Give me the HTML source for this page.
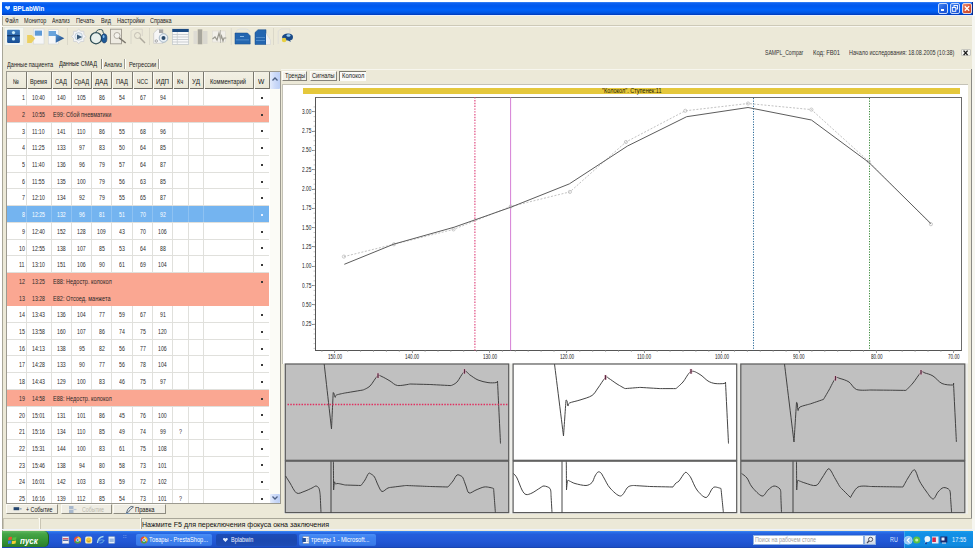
<!DOCTYPE html><html><head><meta charset="utf-8"><style>
*{margin:0;padding:0;box-sizing:border-box}
html,body{width:975px;height:550px;overflow:hidden;background:#fff;font-family:"Liberation Sans",sans-serif;color:#000}
.ab{position:absolute}
.t{position:absolute;white-space:nowrap;line-height:1}

</style></head><body>
<div class="ab" style="left:2px;top:2px;width:971px;height:529px;background:#ECE9D8"></div>
<div class="ab" style="left:2px;top:2px;width:971px;height:13px;background:linear-gradient(#3d85f5 0%,#0a5ff0 12%,#0058ee 30%,#0062fa 60%,#0054e0 85%,#0038b8 100%)"></div>
<svg class="ab" style="left:4.6px;top:5.8px" width="5.6" height="4.3" viewBox="0 0 7 6" preserveAspectRatio="none"><path d="M3.5 6 L0.3 2.6 C-0.5 1.4 0.5 0 1.8 0 C2.6 0 3.2 0.6 3.5 1.1 C3.8 0.6 4.4 0 5.2 0 C6.5 0 7.5 1.4 6.7 2.6 Z" fill="#cfe6ff"/></svg>
<div class="t" style="left:12.80px;top:5.22px;font-size:7.8px;font-weight:bold;font-style:normal;color:#fff;transform:scaleX(0.802);transform-origin:0 0;">BPLabWin</div>
<div class="ab" style="left:938.1px;top:2.7px;width:10px;height:11px;border-radius:2px;border:0.8px solid #c8d8f8;background:linear-gradient(135deg,#4a88f0,#2462e0 50%,#1c52d0)"></div>
<div class="ab" style="left:940.6px;top:9.2px;width:3.5px;height:1.6px;background:#fff"></div>
<div class="ab" style="left:950.1px;top:2.7px;width:10px;height:11px;border-radius:2px;border:0.8px solid #c8d8f8;background:linear-gradient(135deg,#4a88f0,#2462e0 50%,#1c52d0)"></div>
<svg class="ab" style="left:950.1px;top:2.7px" width="10" height="11"><rect x="4" y="2.5" width="3.5" height="3.5" fill="none" stroke="#fff" stroke-width="0.9"/><rect x="2.3" y="4.5" width="3.5" height="3.8" fill="#2462e0" stroke="#fff" stroke-width="0.9"/></svg>
<div class="ab" style="left:962.1px;top:2.7px;width:10px;height:11px;border-radius:2px;border:0.8px solid #e8d8d8;background:linear-gradient(135deg,#e8907a,#d8583a 50%,#c84424)"></div>
<svg class="ab" style="left:962.1px;top:2.7px" width="10" height="11"><path d="M2.8 3.2 L7.2 7.8 M7.2 3.2 L2.8 7.8" stroke="#fff" stroke-width="1.3"/></svg>
<div class="ab" style="left:972px;top:2px;width:1px;height:13px;background:#0a2a8a"></div>
<div class="ab" style="left:2px;top:14.8px;width:971px;height:1.6px;background:#eaf0fc"></div>
<div class="ab" style="left:2.2px;top:16px;width:1.1px;height:515px;background:#a8a698"></div>
<div class="t" style="left:4.50px;top:17.26px;font-size:7px;font-weight:normal;font-style:normal;color:#222;transform:scaleX(0.784);transform-origin:0 0;">Файл</div>
<div class="t" style="left:23.60px;top:17.26px;font-size:7px;font-weight:normal;font-style:normal;color:#222;transform:scaleX(0.786);transform-origin:0 0;">Монитор</div>
<div class="t" style="left:52.30px;top:17.26px;font-size:7px;font-weight:normal;font-style:normal;color:#222;transform:scaleX(0.749);transform-origin:0 0;">Анализ</div>
<div class="t" style="left:76.30px;top:17.26px;font-size:7px;font-weight:normal;font-style:normal;color:#222;transform:scaleX(0.807);transform-origin:0 0;">Печать</div>
<div class="t" style="left:101.00px;top:17.26px;font-size:7px;font-weight:normal;font-style:normal;color:#222;transform:scaleX(0.774);transform-origin:0 0;">Вид</div>
<div class="t" style="left:117.00px;top:17.26px;font-size:7px;font-weight:normal;font-style:normal;color:#222;transform:scaleX(0.804);transform-origin:0 0;">Настройки</div>
<div class="t" style="left:150.40px;top:17.26px;font-size:7px;font-weight:normal;font-style:normal;color:#222;transform:scaleX(0.787);transform-origin:0 0;">Справка</div>
<div class="ab" style="left:2px;top:24.5px;width:971px;height:1px;background:#cdc9b8"></div>
<div class="ab" style="left:2px;top:25.5px;width:971px;height:1px;background:#f8f7f0"></div>
<svg class="ab" style="left:0;top:26px" width="300" height="22" viewBox="0 26 300 22"><defs><linearGradient id="gb" x1="0" y1="0" x2="0" y2="1"><stop offset="0" stop-color="#3c7cc0"/><stop offset="1" stop-color="#184e94"/></linearGradient><linearGradient id="gt" x1="0" y1="0" x2="1" y2="1"><stop offset="0" stop-color="#5a9ad8"/><stop offset="1" stop-color="#143c78"/></linearGradient></defs><rect x="4.6" y="27.3" width="18.9" height="18" fill="#f3f5ef" stroke="#dfe4dc" stroke-width="0.6"/><rect x="7.1" y="29.8" width="12.8" height="13.1" rx="0.8" fill="url(#gb)"/><rect x="7.1" y="35.2" width="12.8" height="1.1" fill="#0c2e5c"/><circle cx="13.5" cy="32.6" r="1.6" fill="#c8ecfa"/><circle cx="13.5" cy="38.9" r="1.6" fill="#c8ecfa"/><rect x="33.3" y="29" width="10.7" height="15" fill="#f6f7f8" stroke="#d4d6d8" stroke-width="0.6"/><rect x="34.8" y="30.6" width="7.2" height="5.1" fill="#5e9ad6"/><path d="M27.1 35 L31.5 35 L35.3 38.3 L31.5 42.9 L27.1 42.9 Z" fill="#ecd060"/><rect x="48.3" y="29.7" width="10" height="14.3" fill="#f6f7f8" stroke="#d4d6d8" stroke-width="0.6"/><rect x="48.6" y="31" width="7.4" height="5" fill="#6aa4dc"/><path d="M55.7 33.7 L64.3 38.2 L55.7 42.7 Z" fill="url(#gt)"/><rect x="67" y="28" width="0.8" height="17" fill="#d8d4c6"/><polygon points="85.90,36.40 83.87,38.54 83.79,41.49 80.84,41.57 78.70,43.60 76.56,41.57 73.61,41.49 73.53,38.54 71.50,36.40 73.53,34.26 73.61,31.31 76.56,31.23 78.70,29.20 80.84,31.23 83.79,31.31 83.87,34.26" fill="#f4f5f6" stroke="#c8ccd2" stroke-width="0.7" stroke-linejoin="round"/><circle cx="78.7" cy="36.4" r="3.8" fill="#e6eef6" stroke="#a8b8c8" stroke-width="0.6"/><path d="M77 34.4 L82.3 36.9 L77 39.4 Z" fill="#3a5a78"/><circle cx="96" cy="38.2" r="5.6" fill="#e8f0ec" stroke="#2c4c54" stroke-width="1.3"/><path d="M95.5 32.5 Q98 28.2 102.5 30 L103.5 33.5" fill="none" stroke="#3c5c64" stroke-width="1"/><ellipse cx="104.2" cy="38.3" rx="2.7" ry="4.6" fill="#1e5a98" stroke="#0c2e5c" stroke-width="0.6"/><ellipse cx="103.6" cy="36.5" rx="0.9" ry="1.6" fill="#8ac0ee"/><rect x="110.5" y="29.2" width="11" height="14.6" fill="#eeebe2" stroke="#9c988e" stroke-width="0.9"/><circle cx="117" cy="35.5" r="3" fill="#f4f2ec" stroke="#aaa69c" stroke-width="0.9"/><path d="M119.2 37.8 L125.7 43" stroke="#7c786e" stroke-width="1.5"/><path d="M131 44 L131 31 L134 29.2 L142.3 29.2 L142.3 36" fill="none" stroke="#d4d1c6" stroke-width="0.8"/><circle cx="137.5" cy="35.5" r="3" fill="none" stroke="#bdb9ae" stroke-width="0.9"/><path d="M139.8 37.8 L145 43" stroke="#aeaa9e" stroke-width="1.5"/><rect x="149" y="28" width="0.8" height="17" fill="#d8d4c6"/><path d="M153.7 33 L157.5 29.3 L163 29.3 L163 43.3 L153.7 43.3 Z" fill="#f6f6f6" stroke="#c0c0c0" stroke-width="0.6"/><rect x="159" y="29.5" width="4" height="3.5" fill="#a8a8a8"/><circle cx="163.5" cy="38" r="4.3" fill="#e8eef4" stroke="#8aa0b4" stroke-width="0.7"/><circle cx="163.5" cy="38" r="2" fill="#2a4a6a"/><circle cx="156.3" cy="41" r="1.2" fill="none" stroke="#888" stroke-width="0.7"/><rect x="172.3" y="29" width="16.4" height="15.3" fill="#f8f8f8" stroke="#b4bcc4" stroke-width="0.6"/><rect x="172.3" y="29" width="16.4" height="3" fill="#1c4a80"/><line x1="172.5" y1="34.5" x2="188.5" y2="34.5" stroke="#b8bcc0" stroke-width="0.7"/><line x1="172.5" y1="37" x2="188.5" y2="37" stroke="#b8bcc0" stroke-width="0.7"/><line x1="172.5" y1="39.5" x2="188.5" y2="39.5" stroke="#b8bcc0" stroke-width="0.7"/><line x1="172.5" y1="42" x2="188.5" y2="42" stroke="#b8bcc0" stroke-width="0.7"/><line x1="177.3" y1="32" x2="177.3" y2="44" stroke="#c4c8cc" stroke-width="0.7"/><rect x="193.5" y="31" width="3.5" height="13" fill="#dedcd4"/><rect x="197.7" y="29.3" width="4.6" height="15" fill="#a8a69c"/><rect x="203" y="31" width="4.5" height="13" fill="#dad8d0"/><rect x="212.3" y="31" width="13" height="11" fill="#f2f0ea" stroke="#dcdad2" stroke-width="0.6"/><path d="M212.5 39 L215 37 L217 40 L219 33 L220.5 39 L221.5 36 L223 41 L224 38 L226.3 38" fill="none" stroke="#9a988e" stroke-width="1.2"/><line x1="220.5" y1="30" x2="220.5" y2="43" stroke="#b4b2aa" stroke-width="0.8"/><rect x="230.8" y="28" width="0.8" height="17" fill="#d8d4c6"/><path d="M236 33 Q236 29 240 29 L246 29 Q249 29 250 32" fill="none" stroke="#d8dce0" stroke-width="0.8"/><path d="M235 33 L247.5 33 L250.2 35.8 L250.2 44.1 L235 44.1 Z" fill="#2466b0" stroke="#174a86" stroke-width="0.5"/><rect x="236" y="39.5" width="13" height="0.8" fill="#5a94d0"/><rect x="240" y="36" width="4" height="1" fill="#8ab8e4"/><path d="M255 32.5 L258 29.7 L266 29.7 L266 44.5 L255 44.5 Z" fill="#2466b0" stroke="#174a86" stroke-width="0.5"/><path d="M266 33 L270.5 40 L270.5 44.5 L266 44.5" fill="#f0f0f0" stroke="#d0d0d0" stroke-width="0.5"/><rect x="256" y="37" width="9" height="0.8" fill="#5a94d0"/><rect x="256" y="40" width="9" height="0.8" fill="#5a94d0"/><rect x="273.2" y="28" width="0.8" height="17" fill="#d8d4c6"/><path d="M278.2 44 L278.2 31 L281 29 L290 29 L290 33" fill="none" stroke="#d8d8d8" stroke-width="0.7"/><path d="M282 37 Q283 33.4 288 33.4 Q293 33.4 293 37 Q293 40 290 40.5 L291 42 L288 40.6 Q282.5 40.5 282 37 Z" fill="#1a4a86"/><ellipse cx="288.5" cy="35.5" rx="2" ry="1.2" fill="#9ad0f4"/><circle cx="284.1" cy="40" r="2.3" fill="#e8d040"/></svg>
<div class="t" style="left:765.20px;top:50.27px;font-size:6.5px;font-weight:normal;font-style:normal;color:#333;transform:scaleX(0.785);transform-origin:0 0;">SAMPL_Compar</div>
<div class="t" style="left:812.60px;top:50.27px;font-size:6.5px;font-weight:normal;font-style:normal;color:#333;transform:scaleX(0.897);transform-origin:0 0;">Код: FB01</div>
<div class="t" style="left:848.70px;top:50.27px;font-size:6.5px;font-weight:normal;font-style:normal;color:#333;transform:scaleX(0.839);transform-origin:0 0;">Начало исследования: 18.08.2005 (10:38)</div>
<div class="ab" style="left:961.4px;top:48.7px;width:9.2px;height:7.7px;background:#f4f4ee;border:0.8px solid #c8c8c0;border-radius:1px"></div>
<svg class="ab" style="left:961.4px;top:48.7px" width="9.2" height="7.7"><path d="M2.6 1.6 L6.6 6.1 M6.6 1.6 L2.6 6.1" stroke="#1a1a1a" stroke-width="1.4"/></svg>
<div class="t" style="left:7.20px;top:61.77px;font-size:6.5px;font-weight:normal;font-style:normal;color:#222;transform:scaleX(0.862);transform-origin:0 0;">Данные пациента</div>
<div class="t" style="left:59.30px;top:61.14px;font-size:6.8px;font-weight:normal;font-style:normal;color:#111;transform:scaleX(0.820);transform-origin:0 0;">Данные СМАД</div>
<div class="ab" style="left:100.8px;top:59.3px;width:1px;height:9.4px;background:#8a887c"></div><div class="ab" style="left:101.8px;top:59.3px;width:0.8px;height:9.4px;background:#fff"></div>
<div class="t" style="left:104.00px;top:61.97px;font-size:6.5px;font-weight:normal;font-style:normal;color:#222;transform:scaleX(0.820);transform-origin:0 0;">Анализ</div>
<div class="ab" style="left:124.3px;top:59.3px;width:1px;height:9.4px;background:#a09e92"></div><div class="ab" style="left:125.3px;top:59.3px;width:0.8px;height:9.4px;background:#fff"></div>
<div class="t" style="left:128.70px;top:61.97px;font-size:6.5px;font-weight:normal;font-style:normal;color:#222;transform:scaleX(0.880);transform-origin:0 0;">Регрессии</div>
<div class="ab" style="left:158.3px;top:59.3px;width:1px;height:9.4px;background:#a09e92"></div><div class="ab" style="left:159.3px;top:59.3px;width:0.8px;height:9.4px;background:#fff"></div>
<div class="ab" style="left:6px;top:71px;width:274.5px;height:432.5px;background:#fff;border:1px solid #9c9a90"></div>
<div class="ab" style="left:6.8px;top:71.8px;width:262.59999999999997px;height:16.799999999999997px;background:linear-gradient(#f2f0e4,#ebe8d8)"></div>
<div class="ab" style="left:6.8px;top:87.6px;width:262.59999999999997px;height:1px;background:#6e6c64"></div>
<div class="ab" style="left:25.5px;top:71.8px;width:1px;height:16.799999999999997px;background:#7a786e"></div>
<div class="ab" style="left:26.5px;top:71.8px;width:1px;height:16.799999999999997px;background:#fbfaf4"></div>
<div class="ab" style="left:50.8px;top:71.8px;width:1px;height:16.799999999999997px;background:#7a786e"></div>
<div class="ab" style="left:51.8px;top:71.8px;width:1px;height:16.799999999999997px;background:#fbfaf4"></div>
<div class="ab" style="left:70.9px;top:71.8px;width:1px;height:16.799999999999997px;background:#7a786e"></div>
<div class="ab" style="left:71.9px;top:71.8px;width:1px;height:16.799999999999997px;background:#fbfaf4"></div>
<div class="ab" style="left:91.0px;top:71.8px;width:1px;height:16.799999999999997px;background:#7a786e"></div>
<div class="ab" style="left:92.0px;top:71.8px;width:1px;height:16.799999999999997px;background:#fbfaf4"></div>
<div class="ab" style="left:111.3px;top:71.8px;width:1px;height:16.799999999999997px;background:#7a786e"></div>
<div class="ab" style="left:112.3px;top:71.8px;width:1px;height:16.799999999999997px;background:#fbfaf4"></div>
<div class="ab" style="left:131.9px;top:71.8px;width:1px;height:16.799999999999997px;background:#7a786e"></div>
<div class="ab" style="left:132.9px;top:71.8px;width:1px;height:16.799999999999997px;background:#fbfaf4"></div>
<div class="ab" style="left:152.1px;top:71.8px;width:1px;height:16.799999999999997px;background:#7a786e"></div>
<div class="ab" style="left:153.1px;top:71.8px;width:1px;height:16.799999999999997px;background:#fbfaf4"></div>
<div class="ab" style="left:172.1px;top:71.8px;width:1px;height:16.799999999999997px;background:#7a786e"></div>
<div class="ab" style="left:173.1px;top:71.8px;width:1px;height:16.799999999999997px;background:#fbfaf4"></div>
<div class="ab" style="left:187.5px;top:71.8px;width:1px;height:16.799999999999997px;background:#7a786e"></div>
<div class="ab" style="left:188.5px;top:71.8px;width:1px;height:16.799999999999997px;background:#fbfaf4"></div>
<div class="ab" style="left:202.6px;top:71.8px;width:1px;height:16.799999999999997px;background:#7a786e"></div>
<div class="ab" style="left:203.6px;top:71.8px;width:1px;height:16.799999999999997px;background:#fbfaf4"></div>
<div class="ab" style="left:253.1px;top:71.8px;width:1px;height:16.799999999999997px;background:#7a786e"></div>
<div class="ab" style="left:254.1px;top:71.8px;width:1px;height:16.799999999999997px;background:#fbfaf4"></div>
<div class="ab" style="left:268.9px;top:71.8px;width:1px;height:16.799999999999997px;background:#7a786e"></div>
<div class="ab" style="left:269.9px;top:71.8px;width:1px;height:16.799999999999997px;background:#fbfaf4"></div>
<div class="t" style="left:13.25px;top:78.06px;font-size:7px;font-weight:normal;font-style:normal;color:#151515;transform:scaleX(0.799);transform-origin:0 0;">№</div>
<div class="t" style="left:30.15px;top:78.06px;font-size:7px;font-weight:normal;font-style:normal;color:#151515;transform:scaleX(0.807);transform-origin:0 0;">Время</div>
<div class="t" style="left:55.35px;top:78.06px;font-size:7px;font-weight:normal;font-style:normal;color:#151515;transform:scaleX(0.825);transform-origin:0 0;">САД</div>
<div class="t" style="left:73.95px;top:78.06px;font-size:7px;font-weight:normal;font-style:normal;color:#151515;transform:scaleX(0.807);transform-origin:0 0;">СрАД</div>
<div class="t" style="left:95.35px;top:78.06px;font-size:7px;font-weight:normal;font-style:normal;color:#151515;transform:scaleX(0.876);transform-origin:0 0;">ДАД</div>
<div class="t" style="left:116.10px;top:78.06px;font-size:7px;font-weight:normal;font-style:normal;color:#151515;transform:scaleX(0.818);transform-origin:0 0;">ПАД</div>
<div class="t" style="left:137.00px;top:78.06px;font-size:7px;font-weight:normal;font-style:normal;color:#151515;transform:scaleX(0.744);transform-origin:0 0;">ЧСС</div>
<div class="t" style="left:156.10px;top:78.06px;font-size:7px;font-weight:normal;font-style:normal;color:#151515;transform:scaleX(0.878);transform-origin:0 0;">ИДП</div>
<div class="t" style="left:177.15px;top:78.06px;font-size:7px;font-weight:normal;font-style:normal;color:#151515;transform:scaleX(0.816);transform-origin:0 0;">Кч</div>
<div class="t" style="left:191.55px;top:78.06px;font-size:7px;font-weight:normal;font-style:normal;color:#151515;transform:scaleX(0.902);transform-origin:0 0;">УД</div>
<div class="t" style="left:210.35px;top:78.06px;font-size:7px;font-weight:normal;font-style:normal;color:#151515;transform:scaleX(0.817);transform-origin:0 0;">Комментарий</div>
<div class="t" style="left:258.35px;top:78.06px;font-size:7px;font-weight:normal;font-style:normal;color:#151515;transform:scaleX(0.953);transform-origin:0 0;">W</div>
<div class="ab" style="left:7px;top:88.8px;width:262.4px;height:414.2px;overflow:hidden">
<div class="ab" style="left:0;top:16.7px;width:262.4px;height:16.7px;background:#faa792"></div>
<div class="ab" style="left:0;top:116.9px;width:262.4px;height:16.7px;background:#74b4f0"></div>
<div class="ab" style="left:0;top:183.7px;width:262.4px;height:16.7px;background:#faa792"></div>
<div class="ab" style="left:0;top:200.4px;width:262.4px;height:16.7px;background:#faa792"></div>
<div class="ab" style="left:0;top:300.6px;width:262.4px;height:16.7px;background:#faa792"></div>
<div class="ab" style="left:18.5px;top:0;width:1px;height:414.2px;background:#e0e0dc"></div>
<div class="ab" style="left:43.8px;top:0;width:1px;height:414.2px;background:#e0e0dc"></div>
<div class="ab" style="left:63.9px;top:0;width:1px;height:414.2px;background:#e0e0dc"></div>
<div class="ab" style="left:84.0px;top:0;width:1px;height:414.2px;background:#e0e0dc"></div>
<div class="ab" style="left:104.3px;top:0;width:1px;height:414.2px;background:#e0e0dc"></div>
<div class="ab" style="left:124.9px;top:0;width:1px;height:414.2px;background:#e0e0dc"></div>
<div class="ab" style="left:145.1px;top:0;width:1px;height:414.2px;background:#e0e0dc"></div>
<div class="ab" style="left:165.1px;top:0;width:1px;height:414.2px;background:#e0e0dc"></div>
<div class="ab" style="left:180.5px;top:0;width:1px;height:414.2px;background:#e0e0dc"></div>
<div class="ab" style="left:195.6px;top:0;width:1px;height:414.2px;background:#e0e0dc"></div>
<div class="ab" style="left:246.1px;top:0;width:1px;height:414.2px;background:#e0e0dc"></div>
<div class="ab" style="left:0;top:16.2px;width:262.4px;height:1px;background:#e0e0dc"></div>
<div class="ab" style="left:0;top:32.9px;width:262.4px;height:1px;background:#e0e0dc"></div>
<div class="ab" style="left:0;top:49.6px;width:262.4px;height:1px;background:#e0e0dc"></div>
<div class="ab" style="left:0;top:66.3px;width:262.4px;height:1px;background:#e0e0dc"></div>
<div class="ab" style="left:0;top:83.0px;width:262.4px;height:1px;background:#e0e0dc"></div>
<div class="ab" style="left:0;top:99.7px;width:262.4px;height:1px;background:#e0e0dc"></div>
<div class="ab" style="left:0;top:116.4px;width:262.4px;height:1px;background:#e0e0dc"></div>
<div class="ab" style="left:0;top:133.1px;width:262.4px;height:1px;background:#e0e0dc"></div>
<div class="ab" style="left:0;top:149.8px;width:262.4px;height:1px;background:#e0e0dc"></div>
<div class="ab" style="left:0;top:166.5px;width:262.4px;height:1px;background:#e0e0dc"></div>
<div class="ab" style="left:0;top:183.2px;width:262.4px;height:1px;background:#e0e0dc"></div>
<div class="ab" style="left:0;top:199.9px;width:262.4px;height:1px;background:#e0e0dc"></div>
<div class="ab" style="left:0;top:216.6px;width:262.4px;height:1px;background:#e0e0dc"></div>
<div class="ab" style="left:0;top:233.3px;width:262.4px;height:1px;background:#e0e0dc"></div>
<div class="ab" style="left:0;top:250.0px;width:262.4px;height:1px;background:#e0e0dc"></div>
<div class="ab" style="left:0;top:266.7px;width:262.4px;height:1px;background:#e0e0dc"></div>
<div class="ab" style="left:0;top:283.4px;width:262.4px;height:1px;background:#e0e0dc"></div>
<div class="ab" style="left:0;top:300.1px;width:262.4px;height:1px;background:#e0e0dc"></div>
<div class="ab" style="left:0;top:316.8px;width:262.4px;height:1px;background:#e0e0dc"></div>
<div class="ab" style="left:0;top:333.5px;width:262.4px;height:1px;background:#e0e0dc"></div>
<div class="ab" style="left:0;top:350.2px;width:262.4px;height:1px;background:#e0e0dc"></div>
<div class="ab" style="left:0;top:366.9px;width:262.4px;height:1px;background:#e0e0dc"></div>
<div class="ab" style="left:0;top:383.6px;width:262.4px;height:1px;background:#e0e0dc"></div>
<div class="ab" style="left:0;top:400.3px;width:262.4px;height:1px;background:#e0e0dc"></div>
<div class="ab" style="left:0;top:417.0px;width:262.4px;height:1px;background:#e0e0dc"></div>
<div class="ab" style="left:0;top:117.4px;width:262.4px;height:15.7px;background:#74b4f0"></div>
<div class="ab" style="left:18.5px;top:117.4px;width:1px;height:15.7px;background:#8ec2f2"></div>
<div class="ab" style="left:43.8px;top:117.4px;width:1px;height:15.7px;background:#8ec2f2"></div>
<div class="ab" style="left:63.9px;top:117.4px;width:1px;height:15.7px;background:#8ec2f2"></div>
<div class="ab" style="left:84.0px;top:117.4px;width:1px;height:15.7px;background:#8ec2f2"></div>
<div class="ab" style="left:104.3px;top:117.4px;width:1px;height:15.7px;background:#8ec2f2"></div>
<div class="ab" style="left:124.9px;top:117.4px;width:1px;height:15.7px;background:#8ec2f2"></div>
<div class="ab" style="left:145.1px;top:117.4px;width:1px;height:15.7px;background:#8ec2f2"></div>
<div class="ab" style="left:165.1px;top:117.4px;width:1px;height:15.7px;background:#8ec2f2"></div>
<div class="ab" style="left:180.5px;top:117.4px;width:1px;height:15.7px;background:#8ec2f2"></div>
<div class="ab" style="left:195.6px;top:117.4px;width:1px;height:15.7px;background:#8ec2f2"></div>
<div class="ab" style="left:246.1px;top:117.4px;width:1px;height:15.7px;background:#8ec2f2"></div>
<div class="ab" style="left:0;top:17.0px;width:262.4px;height:16.1px;background:#faa792"></div>
<div class="ab" style="left:0;top:184.0px;width:262.4px;height:16.7px;background:#faa792"></div>
<div class="ab" style="left:0;top:200.7px;width:262.4px;height:16.1px;background:#faa792"></div>
<div class="ab" style="left:0;top:300.9px;width:262.4px;height:16.1px;background:#faa792"></div>
</div>
<div class="t" style="left:21.84px;top:95.22px;font-size:6.5px;font-weight:normal;font-style:normal;color:#2a2a2a;transform:scaleX(0.820);transform-origin:0 0;">1</div>
<div class="t" style="left:32.14px;top:95.22px;font-size:6.5px;font-weight:normal;font-style:normal;color:#2a2a2a;transform:scaleX(0.800);transform-origin:0 0;">10:40</div>
<div class="t" style="left:57.01px;top:95.22px;font-size:6.5px;font-weight:normal;font-style:normal;color:#2a2a2a;transform:scaleX(0.800);transform-origin:0 0;">140</div>
<div class="t" style="left:77.11px;top:95.22px;font-size:6.5px;font-weight:normal;font-style:normal;color:#2a2a2a;transform:scaleX(0.800);transform-origin:0 0;">105</div>
<div class="t" style="left:98.76px;top:95.22px;font-size:6.5px;font-weight:normal;font-style:normal;color:#2a2a2a;transform:scaleX(0.800);transform-origin:0 0;">86</div>
<div class="t" style="left:119.21px;top:95.22px;font-size:6.5px;font-weight:normal;font-style:normal;color:#2a2a2a;transform:scaleX(0.800);transform-origin:0 0;">54</div>
<div class="t" style="left:139.61px;top:95.22px;font-size:6.5px;font-weight:normal;font-style:normal;color:#2a2a2a;transform:scaleX(0.800);transform-origin:0 0;">67</div>
<div class="t" style="left:159.71px;top:95.22px;font-size:6.5px;font-weight:normal;font-style:normal;color:#2a2a2a;transform:scaleX(0.800);transform-origin:0 0;">94</div>
<div class="ab" style="left:261px;top:97px;width:2px;height:2px;background:#3a3a3a"></div>
<div class="t" style="left:21.84px;top:111.92px;font-size:6.5px;font-weight:normal;font-style:normal;color:#2a2a2a;transform:scaleX(0.820);transform-origin:0 0;">2</div>
<div class="t" style="left:32.14px;top:111.92px;font-size:6.5px;font-weight:normal;font-style:normal;color:#2a2a2a;transform:scaleX(0.800);transform-origin:0 0;">10:55</div>
<div class="t" style="left:53.20px;top:111.92px;font-size:6.5px;font-weight:normal;font-style:normal;color:#2a2a2a;transform:scaleX(0.860);transform-origin:0 0;">E99: Сбой пневматики</div>
<div class="ab" style="left:261px;top:114px;width:2px;height:2px;background:#3a3a3a"></div>
<div class="t" style="left:21.84px;top:128.62px;font-size:6.5px;font-weight:normal;font-style:normal;color:#2a2a2a;transform:scaleX(0.820);transform-origin:0 0;">3</div>
<div class="t" style="left:32.34px;top:128.62px;font-size:6.5px;font-weight:normal;font-style:normal;color:#2a2a2a;transform:scaleX(0.800);transform-origin:0 0;">11:10</div>
<div class="t" style="left:57.01px;top:128.62px;font-size:6.5px;font-weight:normal;font-style:normal;color:#2a2a2a;transform:scaleX(0.800);transform-origin:0 0;">141</div>
<div class="t" style="left:77.31px;top:128.62px;font-size:6.5px;font-weight:normal;font-style:normal;color:#2a2a2a;transform:scaleX(0.800);transform-origin:0 0;">110</div>
<div class="t" style="left:98.76px;top:128.62px;font-size:6.5px;font-weight:normal;font-style:normal;color:#2a2a2a;transform:scaleX(0.800);transform-origin:0 0;">86</div>
<div class="t" style="left:119.21px;top:128.62px;font-size:6.5px;font-weight:normal;font-style:normal;color:#2a2a2a;transform:scaleX(0.800);transform-origin:0 0;">55</div>
<div class="t" style="left:139.61px;top:128.62px;font-size:6.5px;font-weight:normal;font-style:normal;color:#2a2a2a;transform:scaleX(0.800);transform-origin:0 0;">68</div>
<div class="t" style="left:159.71px;top:128.62px;font-size:6.5px;font-weight:normal;font-style:normal;color:#2a2a2a;transform:scaleX(0.800);transform-origin:0 0;">96</div>
<div class="ab" style="left:261px;top:130px;width:2px;height:2px;background:#3a3a3a"></div>
<div class="t" style="left:21.84px;top:145.32px;font-size:6.5px;font-weight:normal;font-style:normal;color:#2a2a2a;transform:scaleX(0.820);transform-origin:0 0;">4</div>
<div class="t" style="left:32.34px;top:145.32px;font-size:6.5px;font-weight:normal;font-style:normal;color:#2a2a2a;transform:scaleX(0.800);transform-origin:0 0;">11:25</div>
<div class="t" style="left:57.01px;top:145.32px;font-size:6.5px;font-weight:normal;font-style:normal;color:#2a2a2a;transform:scaleX(0.800);transform-origin:0 0;">133</div>
<div class="t" style="left:78.56px;top:145.32px;font-size:6.5px;font-weight:normal;font-style:normal;color:#2a2a2a;transform:scaleX(0.800);transform-origin:0 0;">97</div>
<div class="t" style="left:98.76px;top:145.32px;font-size:6.5px;font-weight:normal;font-style:normal;color:#2a2a2a;transform:scaleX(0.800);transform-origin:0 0;">83</div>
<div class="t" style="left:119.21px;top:145.32px;font-size:6.5px;font-weight:normal;font-style:normal;color:#2a2a2a;transform:scaleX(0.800);transform-origin:0 0;">50</div>
<div class="t" style="left:139.61px;top:145.32px;font-size:6.5px;font-weight:normal;font-style:normal;color:#2a2a2a;transform:scaleX(0.800);transform-origin:0 0;">64</div>
<div class="t" style="left:159.71px;top:145.32px;font-size:6.5px;font-weight:normal;font-style:normal;color:#2a2a2a;transform:scaleX(0.800);transform-origin:0 0;">85</div>
<div class="ab" style="left:261px;top:147px;width:2px;height:2px;background:#3a3a3a"></div>
<div class="t" style="left:21.84px;top:162.02px;font-size:6.5px;font-weight:normal;font-style:normal;color:#2a2a2a;transform:scaleX(0.820);transform-origin:0 0;">5</div>
<div class="t" style="left:32.34px;top:162.02px;font-size:6.5px;font-weight:normal;font-style:normal;color:#2a2a2a;transform:scaleX(0.800);transform-origin:0 0;">11:40</div>
<div class="t" style="left:57.01px;top:162.02px;font-size:6.5px;font-weight:normal;font-style:normal;color:#2a2a2a;transform:scaleX(0.800);transform-origin:0 0;">136</div>
<div class="t" style="left:78.56px;top:162.02px;font-size:6.5px;font-weight:normal;font-style:normal;color:#2a2a2a;transform:scaleX(0.800);transform-origin:0 0;">96</div>
<div class="t" style="left:98.76px;top:162.02px;font-size:6.5px;font-weight:normal;font-style:normal;color:#2a2a2a;transform:scaleX(0.800);transform-origin:0 0;">79</div>
<div class="t" style="left:119.21px;top:162.02px;font-size:6.5px;font-weight:normal;font-style:normal;color:#2a2a2a;transform:scaleX(0.800);transform-origin:0 0;">57</div>
<div class="t" style="left:139.61px;top:162.02px;font-size:6.5px;font-weight:normal;font-style:normal;color:#2a2a2a;transform:scaleX(0.800);transform-origin:0 0;">64</div>
<div class="t" style="left:159.71px;top:162.02px;font-size:6.5px;font-weight:normal;font-style:normal;color:#2a2a2a;transform:scaleX(0.800);transform-origin:0 0;">87</div>
<div class="ab" style="left:261px;top:164px;width:2px;height:2px;background:#3a3a3a"></div>
<div class="t" style="left:21.84px;top:178.72px;font-size:6.5px;font-weight:normal;font-style:normal;color:#2a2a2a;transform:scaleX(0.820);transform-origin:0 0;">6</div>
<div class="t" style="left:32.34px;top:178.72px;font-size:6.5px;font-weight:normal;font-style:normal;color:#2a2a2a;transform:scaleX(0.800);transform-origin:0 0;">11:55</div>
<div class="t" style="left:57.01px;top:178.72px;font-size:6.5px;font-weight:normal;font-style:normal;color:#2a2a2a;transform:scaleX(0.800);transform-origin:0 0;">135</div>
<div class="t" style="left:77.11px;top:178.72px;font-size:6.5px;font-weight:normal;font-style:normal;color:#2a2a2a;transform:scaleX(0.800);transform-origin:0 0;">100</div>
<div class="t" style="left:98.76px;top:178.72px;font-size:6.5px;font-weight:normal;font-style:normal;color:#2a2a2a;transform:scaleX(0.800);transform-origin:0 0;">79</div>
<div class="t" style="left:119.21px;top:178.72px;font-size:6.5px;font-weight:normal;font-style:normal;color:#2a2a2a;transform:scaleX(0.800);transform-origin:0 0;">56</div>
<div class="t" style="left:139.61px;top:178.72px;font-size:6.5px;font-weight:normal;font-style:normal;color:#2a2a2a;transform:scaleX(0.800);transform-origin:0 0;">63</div>
<div class="t" style="left:159.71px;top:178.72px;font-size:6.5px;font-weight:normal;font-style:normal;color:#2a2a2a;transform:scaleX(0.800);transform-origin:0 0;">85</div>
<div class="ab" style="left:261px;top:181px;width:2px;height:2px;background:#3a3a3a"></div>
<div class="t" style="left:21.84px;top:195.42px;font-size:6.5px;font-weight:normal;font-style:normal;color:#2a2a2a;transform:scaleX(0.820);transform-origin:0 0;">7</div>
<div class="t" style="left:32.14px;top:195.42px;font-size:6.5px;font-weight:normal;font-style:normal;color:#2a2a2a;transform:scaleX(0.800);transform-origin:0 0;">12:10</div>
<div class="t" style="left:57.01px;top:195.42px;font-size:6.5px;font-weight:normal;font-style:normal;color:#2a2a2a;transform:scaleX(0.800);transform-origin:0 0;">134</div>
<div class="t" style="left:78.56px;top:195.42px;font-size:6.5px;font-weight:normal;font-style:normal;color:#2a2a2a;transform:scaleX(0.800);transform-origin:0 0;">92</div>
<div class="t" style="left:98.76px;top:195.42px;font-size:6.5px;font-weight:normal;font-style:normal;color:#2a2a2a;transform:scaleX(0.800);transform-origin:0 0;">79</div>
<div class="t" style="left:119.21px;top:195.42px;font-size:6.5px;font-weight:normal;font-style:normal;color:#2a2a2a;transform:scaleX(0.800);transform-origin:0 0;">55</div>
<div class="t" style="left:139.61px;top:195.42px;font-size:6.5px;font-weight:normal;font-style:normal;color:#2a2a2a;transform:scaleX(0.800);transform-origin:0 0;">65</div>
<div class="t" style="left:159.71px;top:195.42px;font-size:6.5px;font-weight:normal;font-style:normal;color:#2a2a2a;transform:scaleX(0.800);transform-origin:0 0;">87</div>
<div class="ab" style="left:261px;top:197px;width:2px;height:2px;background:#3a3a3a"></div>
<div class="t" style="left:21.84px;top:212.12px;font-size:6.5px;font-weight:normal;font-style:normal;color:#fff;transform:scaleX(0.820);transform-origin:0 0;">8</div>
<div class="t" style="left:32.14px;top:212.12px;font-size:6.5px;font-weight:normal;font-style:normal;color:#fff;transform:scaleX(0.800);transform-origin:0 0;">12:25</div>
<div class="t" style="left:57.01px;top:212.12px;font-size:6.5px;font-weight:normal;font-style:normal;color:#fff;transform:scaleX(0.800);transform-origin:0 0;">132</div>
<div class="t" style="left:78.56px;top:212.12px;font-size:6.5px;font-weight:normal;font-style:normal;color:#fff;transform:scaleX(0.800);transform-origin:0 0;">96</div>
<div class="t" style="left:98.76px;top:212.12px;font-size:6.5px;font-weight:normal;font-style:normal;color:#fff;transform:scaleX(0.800);transform-origin:0 0;">81</div>
<div class="t" style="left:119.21px;top:212.12px;font-size:6.5px;font-weight:normal;font-style:normal;color:#fff;transform:scaleX(0.800);transform-origin:0 0;">51</div>
<div class="t" style="left:139.61px;top:212.12px;font-size:6.5px;font-weight:normal;font-style:normal;color:#fff;transform:scaleX(0.800);transform-origin:0 0;">70</div>
<div class="t" style="left:159.71px;top:212.12px;font-size:6.5px;font-weight:normal;font-style:normal;color:#fff;transform:scaleX(0.800);transform-origin:0 0;">92</div>
<div class="ab" style="left:261px;top:214px;width:2px;height:2px;background:#e8f0ff"></div>
<div class="t" style="left:21.84px;top:228.82px;font-size:6.5px;font-weight:normal;font-style:normal;color:#2a2a2a;transform:scaleX(0.820);transform-origin:0 0;">9</div>
<div class="t" style="left:32.14px;top:228.82px;font-size:6.5px;font-weight:normal;font-style:normal;color:#2a2a2a;transform:scaleX(0.800);transform-origin:0 0;">12:40</div>
<div class="t" style="left:57.01px;top:228.82px;font-size:6.5px;font-weight:normal;font-style:normal;color:#2a2a2a;transform:scaleX(0.800);transform-origin:0 0;">152</div>
<div class="t" style="left:77.11px;top:228.82px;font-size:6.5px;font-weight:normal;font-style:normal;color:#2a2a2a;transform:scaleX(0.800);transform-origin:0 0;">128</div>
<div class="t" style="left:97.31px;top:228.82px;font-size:6.5px;font-weight:normal;font-style:normal;color:#2a2a2a;transform:scaleX(0.800);transform-origin:0 0;">109</div>
<div class="t" style="left:119.21px;top:228.82px;font-size:6.5px;font-weight:normal;font-style:normal;color:#2a2a2a;transform:scaleX(0.800);transform-origin:0 0;">43</div>
<div class="t" style="left:139.61px;top:228.82px;font-size:6.5px;font-weight:normal;font-style:normal;color:#2a2a2a;transform:scaleX(0.800);transform-origin:0 0;">70</div>
<div class="t" style="left:158.26px;top:228.82px;font-size:6.5px;font-weight:normal;font-style:normal;color:#2a2a2a;transform:scaleX(0.800);transform-origin:0 0;">106</div>
<div class="ab" style="left:261px;top:231px;width:2px;height:2px;background:#3a3a3a"></div>
<div class="t" style="left:18.87px;top:245.52px;font-size:6.5px;font-weight:normal;font-style:normal;color:#2a2a2a;transform:scaleX(0.820);transform-origin:0 0;">10</div>
<div class="t" style="left:32.14px;top:245.52px;font-size:6.5px;font-weight:normal;font-style:normal;color:#2a2a2a;transform:scaleX(0.800);transform-origin:0 0;">12:55</div>
<div class="t" style="left:57.01px;top:245.52px;font-size:6.5px;font-weight:normal;font-style:normal;color:#2a2a2a;transform:scaleX(0.800);transform-origin:0 0;">138</div>
<div class="t" style="left:77.11px;top:245.52px;font-size:6.5px;font-weight:normal;font-style:normal;color:#2a2a2a;transform:scaleX(0.800);transform-origin:0 0;">107</div>
<div class="t" style="left:98.76px;top:245.52px;font-size:6.5px;font-weight:normal;font-style:normal;color:#2a2a2a;transform:scaleX(0.800);transform-origin:0 0;">85</div>
<div class="t" style="left:119.21px;top:245.52px;font-size:6.5px;font-weight:normal;font-style:normal;color:#2a2a2a;transform:scaleX(0.800);transform-origin:0 0;">53</div>
<div class="t" style="left:139.61px;top:245.52px;font-size:6.5px;font-weight:normal;font-style:normal;color:#2a2a2a;transform:scaleX(0.800);transform-origin:0 0;">64</div>
<div class="t" style="left:159.71px;top:245.52px;font-size:6.5px;font-weight:normal;font-style:normal;color:#2a2a2a;transform:scaleX(0.800);transform-origin:0 0;">88</div>
<div class="ab" style="left:261px;top:247px;width:2px;height:2px;background:#3a3a3a"></div>
<div class="t" style="left:19.27px;top:262.22px;font-size:6.5px;font-weight:normal;font-style:normal;color:#2a2a2a;transform:scaleX(0.820);transform-origin:0 0;">11</div>
<div class="t" style="left:32.14px;top:262.22px;font-size:6.5px;font-weight:normal;font-style:normal;color:#2a2a2a;transform:scaleX(0.800);transform-origin:0 0;">13:10</div>
<div class="t" style="left:57.01px;top:262.22px;font-size:6.5px;font-weight:normal;font-style:normal;color:#2a2a2a;transform:scaleX(0.800);transform-origin:0 0;">151</div>
<div class="t" style="left:77.11px;top:262.22px;font-size:6.5px;font-weight:normal;font-style:normal;color:#2a2a2a;transform:scaleX(0.800);transform-origin:0 0;">106</div>
<div class="t" style="left:98.76px;top:262.22px;font-size:6.5px;font-weight:normal;font-style:normal;color:#2a2a2a;transform:scaleX(0.800);transform-origin:0 0;">90</div>
<div class="t" style="left:119.21px;top:262.22px;font-size:6.5px;font-weight:normal;font-style:normal;color:#2a2a2a;transform:scaleX(0.800);transform-origin:0 0;">61</div>
<div class="t" style="left:139.61px;top:262.22px;font-size:6.5px;font-weight:normal;font-style:normal;color:#2a2a2a;transform:scaleX(0.800);transform-origin:0 0;">69</div>
<div class="t" style="left:158.26px;top:262.22px;font-size:6.5px;font-weight:normal;font-style:normal;color:#2a2a2a;transform:scaleX(0.800);transform-origin:0 0;">104</div>
<div class="ab" style="left:261px;top:264px;width:2px;height:2px;background:#3a3a3a"></div>
<div class="t" style="left:18.87px;top:278.92px;font-size:6.5px;font-weight:normal;font-style:normal;color:#2a2a2a;transform:scaleX(0.820);transform-origin:0 0;">12</div>
<div class="t" style="left:32.14px;top:278.92px;font-size:6.5px;font-weight:normal;font-style:normal;color:#2a2a2a;transform:scaleX(0.800);transform-origin:0 0;">13:25</div>
<div class="t" style="left:53.20px;top:278.92px;font-size:6.5px;font-weight:normal;font-style:normal;color:#2a2a2a;transform:scaleX(0.860);transform-origin:0 0;">E88: Недостр. колокол</div>
<div class="ab" style="left:261px;top:281px;width:2px;height:2px;background:#3a3a3a"></div>
<div class="t" style="left:18.87px;top:295.62px;font-size:6.5px;font-weight:normal;font-style:normal;color:#2a2a2a;transform:scaleX(0.820);transform-origin:0 0;">13</div>
<div class="t" style="left:32.14px;top:295.62px;font-size:6.5px;font-weight:normal;font-style:normal;color:#2a2a2a;transform:scaleX(0.800);transform-origin:0 0;">13:28</div>
<div class="t" style="left:53.20px;top:295.62px;font-size:6.5px;font-weight:normal;font-style:normal;color:#2a2a2a;transform:scaleX(0.860);transform-origin:0 0;">E82: Отсоед. манжета</div>
<div class="t" style="left:18.87px;top:312.32px;font-size:6.5px;font-weight:normal;font-style:normal;color:#2a2a2a;transform:scaleX(0.820);transform-origin:0 0;">14</div>
<div class="t" style="left:32.14px;top:312.32px;font-size:6.5px;font-weight:normal;font-style:normal;color:#2a2a2a;transform:scaleX(0.800);transform-origin:0 0;">13:43</div>
<div class="t" style="left:57.01px;top:312.32px;font-size:6.5px;font-weight:normal;font-style:normal;color:#2a2a2a;transform:scaleX(0.800);transform-origin:0 0;">136</div>
<div class="t" style="left:77.11px;top:312.32px;font-size:6.5px;font-weight:normal;font-style:normal;color:#2a2a2a;transform:scaleX(0.800);transform-origin:0 0;">104</div>
<div class="t" style="left:98.76px;top:312.32px;font-size:6.5px;font-weight:normal;font-style:normal;color:#2a2a2a;transform:scaleX(0.800);transform-origin:0 0;">77</div>
<div class="t" style="left:119.21px;top:312.32px;font-size:6.5px;font-weight:normal;font-style:normal;color:#2a2a2a;transform:scaleX(0.800);transform-origin:0 0;">59</div>
<div class="t" style="left:139.61px;top:312.32px;font-size:6.5px;font-weight:normal;font-style:normal;color:#2a2a2a;transform:scaleX(0.800);transform-origin:0 0;">67</div>
<div class="t" style="left:159.71px;top:312.32px;font-size:6.5px;font-weight:normal;font-style:normal;color:#2a2a2a;transform:scaleX(0.800);transform-origin:0 0;">91</div>
<div class="ab" style="left:261px;top:314px;width:2px;height:2px;background:#3a3a3a"></div>
<div class="t" style="left:18.87px;top:329.02px;font-size:6.5px;font-weight:normal;font-style:normal;color:#2a2a2a;transform:scaleX(0.820);transform-origin:0 0;">15</div>
<div class="t" style="left:32.14px;top:329.02px;font-size:6.5px;font-weight:normal;font-style:normal;color:#2a2a2a;transform:scaleX(0.800);transform-origin:0 0;">13:58</div>
<div class="t" style="left:57.01px;top:329.02px;font-size:6.5px;font-weight:normal;font-style:normal;color:#2a2a2a;transform:scaleX(0.800);transform-origin:0 0;">160</div>
<div class="t" style="left:77.11px;top:329.02px;font-size:6.5px;font-weight:normal;font-style:normal;color:#2a2a2a;transform:scaleX(0.800);transform-origin:0 0;">107</div>
<div class="t" style="left:98.76px;top:329.02px;font-size:6.5px;font-weight:normal;font-style:normal;color:#2a2a2a;transform:scaleX(0.800);transform-origin:0 0;">86</div>
<div class="t" style="left:119.21px;top:329.02px;font-size:6.5px;font-weight:normal;font-style:normal;color:#2a2a2a;transform:scaleX(0.800);transform-origin:0 0;">74</div>
<div class="t" style="left:139.61px;top:329.02px;font-size:6.5px;font-weight:normal;font-style:normal;color:#2a2a2a;transform:scaleX(0.800);transform-origin:0 0;">75</div>
<div class="t" style="left:158.26px;top:329.02px;font-size:6.5px;font-weight:normal;font-style:normal;color:#2a2a2a;transform:scaleX(0.800);transform-origin:0 0;">120</div>
<div class="ab" style="left:261px;top:331px;width:2px;height:2px;background:#3a3a3a"></div>
<div class="t" style="left:18.87px;top:345.72px;font-size:6.5px;font-weight:normal;font-style:normal;color:#2a2a2a;transform:scaleX(0.820);transform-origin:0 0;">16</div>
<div class="t" style="left:32.14px;top:345.72px;font-size:6.5px;font-weight:normal;font-style:normal;color:#2a2a2a;transform:scaleX(0.800);transform-origin:0 0;">14:13</div>
<div class="t" style="left:57.01px;top:345.72px;font-size:6.5px;font-weight:normal;font-style:normal;color:#2a2a2a;transform:scaleX(0.800);transform-origin:0 0;">138</div>
<div class="t" style="left:78.56px;top:345.72px;font-size:6.5px;font-weight:normal;font-style:normal;color:#2a2a2a;transform:scaleX(0.800);transform-origin:0 0;">95</div>
<div class="t" style="left:98.76px;top:345.72px;font-size:6.5px;font-weight:normal;font-style:normal;color:#2a2a2a;transform:scaleX(0.800);transform-origin:0 0;">82</div>
<div class="t" style="left:119.21px;top:345.72px;font-size:6.5px;font-weight:normal;font-style:normal;color:#2a2a2a;transform:scaleX(0.800);transform-origin:0 0;">56</div>
<div class="t" style="left:139.61px;top:345.72px;font-size:6.5px;font-weight:normal;font-style:normal;color:#2a2a2a;transform:scaleX(0.800);transform-origin:0 0;">77</div>
<div class="t" style="left:158.26px;top:345.72px;font-size:6.5px;font-weight:normal;font-style:normal;color:#2a2a2a;transform:scaleX(0.800);transform-origin:0 0;">106</div>
<div class="ab" style="left:261px;top:348px;width:2px;height:2px;background:#3a3a3a"></div>
<div class="t" style="left:18.87px;top:362.42px;font-size:6.5px;font-weight:normal;font-style:normal;color:#2a2a2a;transform:scaleX(0.820);transform-origin:0 0;">17</div>
<div class="t" style="left:32.14px;top:362.42px;font-size:6.5px;font-weight:normal;font-style:normal;color:#2a2a2a;transform:scaleX(0.800);transform-origin:0 0;">14:28</div>
<div class="t" style="left:57.01px;top:362.42px;font-size:6.5px;font-weight:normal;font-style:normal;color:#2a2a2a;transform:scaleX(0.800);transform-origin:0 0;">133</div>
<div class="t" style="left:78.56px;top:362.42px;font-size:6.5px;font-weight:normal;font-style:normal;color:#2a2a2a;transform:scaleX(0.800);transform-origin:0 0;">90</div>
<div class="t" style="left:98.76px;top:362.42px;font-size:6.5px;font-weight:normal;font-style:normal;color:#2a2a2a;transform:scaleX(0.800);transform-origin:0 0;">77</div>
<div class="t" style="left:119.21px;top:362.42px;font-size:6.5px;font-weight:normal;font-style:normal;color:#2a2a2a;transform:scaleX(0.800);transform-origin:0 0;">56</div>
<div class="t" style="left:139.61px;top:362.42px;font-size:6.5px;font-weight:normal;font-style:normal;color:#2a2a2a;transform:scaleX(0.800);transform-origin:0 0;">78</div>
<div class="t" style="left:158.26px;top:362.42px;font-size:6.5px;font-weight:normal;font-style:normal;color:#2a2a2a;transform:scaleX(0.800);transform-origin:0 0;">104</div>
<div class="ab" style="left:261px;top:364px;width:2px;height:2px;background:#3a3a3a"></div>
<div class="t" style="left:18.87px;top:379.12px;font-size:6.5px;font-weight:normal;font-style:normal;color:#2a2a2a;transform:scaleX(0.820);transform-origin:0 0;">18</div>
<div class="t" style="left:32.14px;top:379.12px;font-size:6.5px;font-weight:normal;font-style:normal;color:#2a2a2a;transform:scaleX(0.800);transform-origin:0 0;">14:43</div>
<div class="t" style="left:57.01px;top:379.12px;font-size:6.5px;font-weight:normal;font-style:normal;color:#2a2a2a;transform:scaleX(0.800);transform-origin:0 0;">129</div>
<div class="t" style="left:77.11px;top:379.12px;font-size:6.5px;font-weight:normal;font-style:normal;color:#2a2a2a;transform:scaleX(0.800);transform-origin:0 0;">100</div>
<div class="t" style="left:98.76px;top:379.12px;font-size:6.5px;font-weight:normal;font-style:normal;color:#2a2a2a;transform:scaleX(0.800);transform-origin:0 0;">83</div>
<div class="t" style="left:119.21px;top:379.12px;font-size:6.5px;font-weight:normal;font-style:normal;color:#2a2a2a;transform:scaleX(0.800);transform-origin:0 0;">46</div>
<div class="t" style="left:139.61px;top:379.12px;font-size:6.5px;font-weight:normal;font-style:normal;color:#2a2a2a;transform:scaleX(0.800);transform-origin:0 0;">75</div>
<div class="t" style="left:159.71px;top:379.12px;font-size:6.5px;font-weight:normal;font-style:normal;color:#2a2a2a;transform:scaleX(0.800);transform-origin:0 0;">97</div>
<div class="ab" style="left:261px;top:381px;width:2px;height:2px;background:#3a3a3a"></div>
<div class="t" style="left:18.87px;top:395.82px;font-size:6.5px;font-weight:normal;font-style:normal;color:#2a2a2a;transform:scaleX(0.820);transform-origin:0 0;">19</div>
<div class="t" style="left:32.14px;top:395.82px;font-size:6.5px;font-weight:normal;font-style:normal;color:#2a2a2a;transform:scaleX(0.800);transform-origin:0 0;">14:58</div>
<div class="t" style="left:53.20px;top:395.82px;font-size:6.5px;font-weight:normal;font-style:normal;color:#2a2a2a;transform:scaleX(0.860);transform-origin:0 0;">E88: Недостр. колокол</div>
<div class="ab" style="left:261px;top:398px;width:2px;height:2px;background:#3a3a3a"></div>
<div class="t" style="left:18.87px;top:412.52px;font-size:6.5px;font-weight:normal;font-style:normal;color:#2a2a2a;transform:scaleX(0.820);transform-origin:0 0;">20</div>
<div class="t" style="left:32.14px;top:412.52px;font-size:6.5px;font-weight:normal;font-style:normal;color:#2a2a2a;transform:scaleX(0.800);transform-origin:0 0;">15:01</div>
<div class="t" style="left:57.01px;top:412.52px;font-size:6.5px;font-weight:normal;font-style:normal;color:#2a2a2a;transform:scaleX(0.800);transform-origin:0 0;">131</div>
<div class="t" style="left:77.11px;top:412.52px;font-size:6.5px;font-weight:normal;font-style:normal;color:#2a2a2a;transform:scaleX(0.800);transform-origin:0 0;">101</div>
<div class="t" style="left:98.76px;top:412.52px;font-size:6.5px;font-weight:normal;font-style:normal;color:#2a2a2a;transform:scaleX(0.800);transform-origin:0 0;">86</div>
<div class="t" style="left:119.21px;top:412.52px;font-size:6.5px;font-weight:normal;font-style:normal;color:#2a2a2a;transform:scaleX(0.800);transform-origin:0 0;">45</div>
<div class="t" style="left:139.61px;top:412.52px;font-size:6.5px;font-weight:normal;font-style:normal;color:#2a2a2a;transform:scaleX(0.800);transform-origin:0 0;">76</div>
<div class="t" style="left:158.26px;top:412.52px;font-size:6.5px;font-weight:normal;font-style:normal;color:#2a2a2a;transform:scaleX(0.800);transform-origin:0 0;">100</div>
<div class="ab" style="left:261px;top:414px;width:2px;height:2px;background:#3a3a3a"></div>
<div class="t" style="left:18.87px;top:429.22px;font-size:6.5px;font-weight:normal;font-style:normal;color:#2a2a2a;transform:scaleX(0.820);transform-origin:0 0;">21</div>
<div class="t" style="left:32.14px;top:429.22px;font-size:6.5px;font-weight:normal;font-style:normal;color:#2a2a2a;transform:scaleX(0.800);transform-origin:0 0;">15:16</div>
<div class="t" style="left:57.01px;top:429.22px;font-size:6.5px;font-weight:normal;font-style:normal;color:#2a2a2a;transform:scaleX(0.800);transform-origin:0 0;">134</div>
<div class="t" style="left:77.31px;top:429.22px;font-size:6.5px;font-weight:normal;font-style:normal;color:#2a2a2a;transform:scaleX(0.800);transform-origin:0 0;">110</div>
<div class="t" style="left:98.76px;top:429.22px;font-size:6.5px;font-weight:normal;font-style:normal;color:#2a2a2a;transform:scaleX(0.800);transform-origin:0 0;">85</div>
<div class="t" style="left:119.21px;top:429.22px;font-size:6.5px;font-weight:normal;font-style:normal;color:#2a2a2a;transform:scaleX(0.800);transform-origin:0 0;">49</div>
<div class="t" style="left:139.61px;top:429.22px;font-size:6.5px;font-weight:normal;font-style:normal;color:#2a2a2a;transform:scaleX(0.800);transform-origin:0 0;">74</div>
<div class="t" style="left:159.71px;top:429.22px;font-size:6.5px;font-weight:normal;font-style:normal;color:#2a2a2a;transform:scaleX(0.800);transform-origin:0 0;">99</div>
<div class="t" style="left:178.80px;top:429.22px;font-size:6.5px;font-weight:normal;font-style:normal;color:#2a2a2a;transform:scaleX(0.830);transform-origin:0 0;">?</div>
<div class="ab" style="left:261px;top:431px;width:2px;height:2px;background:#3a3a3a"></div>
<div class="t" style="left:18.87px;top:445.92px;font-size:6.5px;font-weight:normal;font-style:normal;color:#2a2a2a;transform:scaleX(0.820);transform-origin:0 0;">22</div>
<div class="t" style="left:32.14px;top:445.92px;font-size:6.5px;font-weight:normal;font-style:normal;color:#2a2a2a;transform:scaleX(0.800);transform-origin:0 0;">15:31</div>
<div class="t" style="left:57.01px;top:445.92px;font-size:6.5px;font-weight:normal;font-style:normal;color:#2a2a2a;transform:scaleX(0.800);transform-origin:0 0;">144</div>
<div class="t" style="left:77.11px;top:445.92px;font-size:6.5px;font-weight:normal;font-style:normal;color:#2a2a2a;transform:scaleX(0.800);transform-origin:0 0;">100</div>
<div class="t" style="left:98.76px;top:445.92px;font-size:6.5px;font-weight:normal;font-style:normal;color:#2a2a2a;transform:scaleX(0.800);transform-origin:0 0;">83</div>
<div class="t" style="left:119.21px;top:445.92px;font-size:6.5px;font-weight:normal;font-style:normal;color:#2a2a2a;transform:scaleX(0.800);transform-origin:0 0;">61</div>
<div class="t" style="left:139.61px;top:445.92px;font-size:6.5px;font-weight:normal;font-style:normal;color:#2a2a2a;transform:scaleX(0.800);transform-origin:0 0;">75</div>
<div class="t" style="left:158.26px;top:445.92px;font-size:6.5px;font-weight:normal;font-style:normal;color:#2a2a2a;transform:scaleX(0.800);transform-origin:0 0;">108</div>
<div class="ab" style="left:261px;top:448px;width:2px;height:2px;background:#3a3a3a"></div>
<div class="t" style="left:18.87px;top:462.62px;font-size:6.5px;font-weight:normal;font-style:normal;color:#2a2a2a;transform:scaleX(0.820);transform-origin:0 0;">23</div>
<div class="t" style="left:32.14px;top:462.62px;font-size:6.5px;font-weight:normal;font-style:normal;color:#2a2a2a;transform:scaleX(0.800);transform-origin:0 0;">15:46</div>
<div class="t" style="left:57.01px;top:462.62px;font-size:6.5px;font-weight:normal;font-style:normal;color:#2a2a2a;transform:scaleX(0.800);transform-origin:0 0;">138</div>
<div class="t" style="left:78.56px;top:462.62px;font-size:6.5px;font-weight:normal;font-style:normal;color:#2a2a2a;transform:scaleX(0.800);transform-origin:0 0;">94</div>
<div class="t" style="left:98.76px;top:462.62px;font-size:6.5px;font-weight:normal;font-style:normal;color:#2a2a2a;transform:scaleX(0.800);transform-origin:0 0;">80</div>
<div class="t" style="left:119.21px;top:462.62px;font-size:6.5px;font-weight:normal;font-style:normal;color:#2a2a2a;transform:scaleX(0.800);transform-origin:0 0;">58</div>
<div class="t" style="left:139.61px;top:462.62px;font-size:6.5px;font-weight:normal;font-style:normal;color:#2a2a2a;transform:scaleX(0.800);transform-origin:0 0;">73</div>
<div class="t" style="left:158.26px;top:462.62px;font-size:6.5px;font-weight:normal;font-style:normal;color:#2a2a2a;transform:scaleX(0.800);transform-origin:0 0;">101</div>
<div class="ab" style="left:261px;top:464px;width:2px;height:2px;background:#3a3a3a"></div>
<div class="t" style="left:18.87px;top:479.32px;font-size:6.5px;font-weight:normal;font-style:normal;color:#2a2a2a;transform:scaleX(0.820);transform-origin:0 0;">24</div>
<div class="t" style="left:32.14px;top:479.32px;font-size:6.5px;font-weight:normal;font-style:normal;color:#2a2a2a;transform:scaleX(0.800);transform-origin:0 0;">16:01</div>
<div class="t" style="left:57.01px;top:479.32px;font-size:6.5px;font-weight:normal;font-style:normal;color:#2a2a2a;transform:scaleX(0.800);transform-origin:0 0;">142</div>
<div class="t" style="left:77.11px;top:479.32px;font-size:6.5px;font-weight:normal;font-style:normal;color:#2a2a2a;transform:scaleX(0.800);transform-origin:0 0;">103</div>
<div class="t" style="left:98.76px;top:479.32px;font-size:6.5px;font-weight:normal;font-style:normal;color:#2a2a2a;transform:scaleX(0.800);transform-origin:0 0;">83</div>
<div class="t" style="left:119.21px;top:479.32px;font-size:6.5px;font-weight:normal;font-style:normal;color:#2a2a2a;transform:scaleX(0.800);transform-origin:0 0;">59</div>
<div class="t" style="left:139.61px;top:479.32px;font-size:6.5px;font-weight:normal;font-style:normal;color:#2a2a2a;transform:scaleX(0.800);transform-origin:0 0;">72</div>
<div class="t" style="left:158.26px;top:479.32px;font-size:6.5px;font-weight:normal;font-style:normal;color:#2a2a2a;transform:scaleX(0.800);transform-origin:0 0;">102</div>
<div class="ab" style="left:261px;top:481px;width:2px;height:2px;background:#3a3a3a"></div>
<div class="t" style="left:18.87px;top:496.02px;font-size:6.5px;font-weight:normal;font-style:normal;color:#2a2a2a;transform:scaleX(0.820);transform-origin:0 0;">25</div>
<div class="t" style="left:32.14px;top:496.02px;font-size:6.5px;font-weight:normal;font-style:normal;color:#2a2a2a;transform:scaleX(0.800);transform-origin:0 0;">16:16</div>
<div class="t" style="left:57.01px;top:496.02px;font-size:6.5px;font-weight:normal;font-style:normal;color:#2a2a2a;transform:scaleX(0.800);transform-origin:0 0;">139</div>
<div class="t" style="left:77.31px;top:496.02px;font-size:6.5px;font-weight:normal;font-style:normal;color:#2a2a2a;transform:scaleX(0.800);transform-origin:0 0;">112</div>
<div class="t" style="left:98.76px;top:496.02px;font-size:6.5px;font-weight:normal;font-style:normal;color:#2a2a2a;transform:scaleX(0.800);transform-origin:0 0;">85</div>
<div class="t" style="left:119.21px;top:496.02px;font-size:6.5px;font-weight:normal;font-style:normal;color:#2a2a2a;transform:scaleX(0.800);transform-origin:0 0;">54</div>
<div class="t" style="left:139.61px;top:496.02px;font-size:6.5px;font-weight:normal;font-style:normal;color:#2a2a2a;transform:scaleX(0.800);transform-origin:0 0;">73</div>
<div class="t" style="left:158.26px;top:496.02px;font-size:6.5px;font-weight:normal;font-style:normal;color:#2a2a2a;transform:scaleX(0.800);transform-origin:0 0;">101</div>
<div class="t" style="left:178.80px;top:496.02px;font-size:6.5px;font-weight:normal;font-style:normal;color:#2a2a2a;transform:scaleX(0.830);transform-origin:0 0;">?</div>
<div class="ab" style="left:261px;top:498px;width:2px;height:2px;background:#3a3a3a"></div>
<div class="ab" style="left:269.6px;top:71.8px;width:10.2px;height:431.4px;background:#fbfbf6"></div>
<div class="ab" style="left:270px;top:72px;width:9.5px;height:17px;border-radius:1px;background:linear-gradient(90deg,#e4ecfc,#ccdaf8 50%,#bccff6)"></div>
<svg class="ab" style="left:271px;top:76px" width="8" height="6"><path d="M1.5 4.5 L4 2 L6.5 4.5" fill="none" stroke="#4d6185" stroke-width="1.3"/></svg>
<div class="ab" style="left:270px;top:493.5px;width:9.5px;height:9px;border-radius:1px;background:linear-gradient(90deg,#e4ecfc,#ccdaf8 50%,#bccff6)"></div>
<svg class="ab" style="left:271px;top:495px" width="8" height="6"><path d="M1.5 1.5 L4 4 L6.5 1.5" fill="none" stroke="#4d6185" stroke-width="1.3"/></svg>
<div class="ab" style="left:971px;top:69px;width:1px;height:448.5px;background:#8a8a84"></div>
<div class="ab" style="left:972.2px;top:16px;width:2.8px;height:515px;background:#f6f6f0"></div>
<div class="ab" style="left:281.8px;top:71.4px;width:25.5px;height:9.599999999999994px;background:#f3f2ea;border-right:1.3px solid #85837a;border-bottom:1.3px solid #85837a;border-top:1px solid #fdfdf8;border-left:1px solid #fdfdf8"></div>
<div class="t" style="left:285.20px;top:73.14px;font-size:6.8px;font-weight:normal;font-style:normal;color:#1a1a1a;transform:scaleX(0.839);transform-origin:0 0;">Тренды</div>
<div class="ab" style="left:309.7px;top:71.4px;width:27.30000000000001px;height:9.599999999999994px;background:#f3f2ea;border-right:1.3px solid #85837a;border-bottom:1.3px solid #85837a;border-top:1px solid #fdfdf8;border-left:1px solid #fdfdf8"></div>
<div class="t" style="left:312.20px;top:73.14px;font-size:6.8px;font-weight:normal;font-style:normal;color:#1a1a1a;transform:scaleX(0.819);transform-origin:0 0;">Сигналы</div>
<div class="ab" style="left:339.1px;top:71px;width:26.899999999999977px;height:10px;background:#fbfbf8;border-top:1.2px solid #7c7a70;border-left:1.2px solid #7c7a70"></div>
<div class="t" style="left:342.30px;top:73.14px;font-size:6.8px;font-weight:normal;font-style:normal;color:#1a1a1a;transform:scaleX(0.855);transform-origin:0 0;">Колокол</div>
<div class="ab" style="left:282.1px;top:84.3px;width:686px;height:280px;background:#fff;border-top:1px solid #c4c2b6;border-left:1px solid #c4c2b6"></div>
<div class="ab" style="left:281px;top:68.6px;width:690px;height:1px;background:#f7f6ee"></div>
<div class="ab" style="left:303.3px;top:87.6px;width:656.7px;height:6.4px;background:#e5c83c"></div>
<div class="t" style="left:601.70px;top:88.13px;font-size:6.6px;font-weight:normal;font-style:normal;color:#1e1800;transform:scaleX(0.840);transform-origin:0 0;">"Колокол". Ступенек:11</div>
<div class="ab" style="left:314.5px;top:96.7px;width:647.7px;height:254.2px;border:1px solid #6c6c6c;border-left:1.2px solid #555;border-bottom:1.2px solid #555"></div>
<div class="t" style="left:301.50px;top:108.84px;font-size:6.8px;font-weight:normal;font-style:normal;color:#161616;transform:scaleX(0.703);transform-origin:0 0;">3.00</div>
<div class="ab" style="left:312px;top:111.2px;width:3px;height:1px;background:#888"></div>
<div class="t" style="left:301.50px;top:128.16px;font-size:6.8px;font-weight:normal;font-style:normal;color:#161616;transform:scaleX(0.703);transform-origin:0 0;">2.75</div>
<div class="ab" style="left:312px;top:130.5px;width:3px;height:1px;background:#888"></div>
<div class="t" style="left:301.50px;top:147.48px;font-size:6.8px;font-weight:normal;font-style:normal;color:#161616;transform:scaleX(0.703);transform-origin:0 0;">2.50</div>
<div class="ab" style="left:312px;top:149.8px;width:3px;height:1px;background:#888"></div>
<div class="t" style="left:301.50px;top:166.80px;font-size:6.8px;font-weight:normal;font-style:normal;color:#161616;transform:scaleX(0.703);transform-origin:0 0;">2.25</div>
<div class="ab" style="left:312px;top:169.2px;width:3px;height:1px;background:#888"></div>
<div class="t" style="left:301.50px;top:186.12px;font-size:6.8px;font-weight:normal;font-style:normal;color:#161616;transform:scaleX(0.703);transform-origin:0 0;">2.00</div>
<div class="ab" style="left:312px;top:188.5px;width:3px;height:1px;background:#888"></div>
<div class="t" style="left:301.50px;top:205.44px;font-size:6.8px;font-weight:normal;font-style:normal;color:#161616;transform:scaleX(0.703);transform-origin:0 0;">1.75</div>
<div class="ab" style="left:312px;top:207.8px;width:3px;height:1px;background:#888"></div>
<div class="t" style="left:301.50px;top:224.76px;font-size:6.8px;font-weight:normal;font-style:normal;color:#161616;transform:scaleX(0.703);transform-origin:0 0;">1.50</div>
<div class="ab" style="left:312px;top:227.1px;width:3px;height:1px;background:#888"></div>
<div class="t" style="left:301.50px;top:244.08px;font-size:6.8px;font-weight:normal;font-style:normal;color:#161616;transform:scaleX(0.703);transform-origin:0 0;">1.25</div>
<div class="ab" style="left:312px;top:246.4px;width:3px;height:1px;background:#888"></div>
<div class="t" style="left:301.50px;top:263.40px;font-size:6.8px;font-weight:normal;font-style:normal;color:#161616;transform:scaleX(0.703);transform-origin:0 0;">1.00</div>
<div class="ab" style="left:312px;top:265.8px;width:3px;height:1px;background:#888"></div>
<div class="t" style="left:301.50px;top:282.72px;font-size:6.8px;font-weight:normal;font-style:normal;color:#161616;transform:scaleX(0.703);transform-origin:0 0;">0.75</div>
<div class="ab" style="left:312px;top:285.1px;width:3px;height:1px;background:#888"></div>
<div class="t" style="left:301.50px;top:302.04px;font-size:6.8px;font-weight:normal;font-style:normal;color:#161616;transform:scaleX(0.703);transform-origin:0 0;">0.50</div>
<div class="ab" style="left:312px;top:304.4px;width:3px;height:1px;background:#888"></div>
<div class="t" style="left:301.50px;top:321.36px;font-size:6.8px;font-weight:normal;font-style:normal;color:#161616;transform:scaleX(0.703);transform-origin:0 0;">0.25</div>
<div class="ab" style="left:312px;top:323.7px;width:3px;height:1px;background:#888"></div>
<div class="t" style="left:327.80px;top:354.34px;font-size:6.8px;font-weight:normal;font-style:normal;color:#161616;transform:scaleX(0.673);transform-origin:0 0;">150.00</div>
<div class="ab" style="left:334.3px;top:350.5px;width:1px;height:2.2px;background:#999"></div>
<div class="t" style="left:405.17px;top:354.34px;font-size:6.8px;font-weight:normal;font-style:normal;color:#161616;transform:scaleX(0.673);transform-origin:0 0;">140.00</div>
<div class="ab" style="left:411.7px;top:350.5px;width:1px;height:2.2px;background:#999"></div>
<div class="t" style="left:482.54px;top:354.34px;font-size:6.8px;font-weight:normal;font-style:normal;color:#161616;transform:scaleX(0.673);transform-origin:0 0;">130.00</div>
<div class="ab" style="left:489.0px;top:350.5px;width:1px;height:2.2px;background:#999"></div>
<div class="t" style="left:559.91px;top:354.34px;font-size:6.8px;font-weight:normal;font-style:normal;color:#161616;transform:scaleX(0.673);transform-origin:0 0;">120.00</div>
<div class="ab" style="left:566.4px;top:350.5px;width:1px;height:2.2px;background:#999"></div>
<div class="t" style="left:637.28px;top:354.34px;font-size:6.8px;font-weight:normal;font-style:normal;color:#161616;transform:scaleX(0.690);transform-origin:0 0;">110.00</div>
<div class="ab" style="left:643.8px;top:350.5px;width:1px;height:2.2px;background:#999"></div>
<div class="t" style="left:714.65px;top:354.34px;font-size:6.8px;font-weight:normal;font-style:normal;color:#161616;transform:scaleX(0.673);transform-origin:0 0;">100.00</div>
<div class="ab" style="left:721.2px;top:350.5px;width:1px;height:2.2px;background:#999"></div>
<div class="t" style="left:793.27px;top:354.34px;font-size:6.8px;font-weight:normal;font-style:normal;color:#161616;transform:scaleX(0.676);transform-origin:0 0;">90.00</div>
<div class="ab" style="left:798.5px;top:350.5px;width:1px;height:2.2px;background:#999"></div>
<div class="t" style="left:870.64px;top:354.34px;font-size:6.8px;font-weight:normal;font-style:normal;color:#161616;transform:scaleX(0.676);transform-origin:0 0;">80.00</div>
<div class="ab" style="left:875.9px;top:350.5px;width:1px;height:2.2px;background:#999"></div>
<div class="t" style="left:948.01px;top:354.34px;font-size:6.8px;font-weight:normal;font-style:normal;color:#161616;transform:scaleX(0.676);transform-origin:0 0;">70.00</div>
<div class="ab" style="left:953.3px;top:350.5px;width:1px;height:2.2px;background:#999"></div>
<svg class="ab" style="left:0;top:0" width="975" height="550"><line x1="321.9" y1="350.5" x2="321.9" y2="352" stroke="#aaa" stroke-width="0.8"/><line x1="334.8" y1="350.5" x2="334.8" y2="352" stroke="#aaa" stroke-width="0.8"/><line x1="347.7" y1="350.5" x2="347.7" y2="352" stroke="#aaa" stroke-width="0.8"/><line x1="360.6" y1="350.5" x2="360.6" y2="352" stroke="#aaa" stroke-width="0.8"/><line x1="373.5" y1="350.5" x2="373.5" y2="352" stroke="#aaa" stroke-width="0.8"/><line x1="386.4" y1="350.5" x2="386.4" y2="352" stroke="#aaa" stroke-width="0.8"/><line x1="399.3" y1="350.5" x2="399.3" y2="352" stroke="#aaa" stroke-width="0.8"/><line x1="412.2" y1="350.5" x2="412.2" y2="352" stroke="#aaa" stroke-width="0.8"/><line x1="425.1" y1="350.5" x2="425.1" y2="352" stroke="#aaa" stroke-width="0.8"/><line x1="438.0" y1="350.5" x2="438.0" y2="352" stroke="#aaa" stroke-width="0.8"/><line x1="450.8" y1="350.5" x2="450.8" y2="352" stroke="#aaa" stroke-width="0.8"/><line x1="463.7" y1="350.5" x2="463.7" y2="352" stroke="#aaa" stroke-width="0.8"/><line x1="476.6" y1="350.5" x2="476.6" y2="352" stroke="#aaa" stroke-width="0.8"/><line x1="489.5" y1="350.5" x2="489.5" y2="352" stroke="#aaa" stroke-width="0.8"/><line x1="502.4" y1="350.5" x2="502.4" y2="352" stroke="#aaa" stroke-width="0.8"/><line x1="515.3" y1="350.5" x2="515.3" y2="352" stroke="#aaa" stroke-width="0.8"/><line x1="528.2" y1="350.5" x2="528.2" y2="352" stroke="#aaa" stroke-width="0.8"/><line x1="541.1" y1="350.5" x2="541.1" y2="352" stroke="#aaa" stroke-width="0.8"/><line x1="554.0" y1="350.5" x2="554.0" y2="352" stroke="#aaa" stroke-width="0.8"/><line x1="566.9" y1="350.5" x2="566.9" y2="352" stroke="#aaa" stroke-width="0.8"/><line x1="579.8" y1="350.5" x2="579.8" y2="352" stroke="#aaa" stroke-width="0.8"/><line x1="592.7" y1="350.5" x2="592.7" y2="352" stroke="#aaa" stroke-width="0.8"/><line x1="605.6" y1="350.5" x2="605.6" y2="352" stroke="#aaa" stroke-width="0.8"/><line x1="618.5" y1="350.5" x2="618.5" y2="352" stroke="#aaa" stroke-width="0.8"/><line x1="631.4" y1="350.5" x2="631.4" y2="352" stroke="#aaa" stroke-width="0.8"/><line x1="644.3" y1="350.5" x2="644.3" y2="352" stroke="#aaa" stroke-width="0.8"/><line x1="657.2" y1="350.5" x2="657.2" y2="352" stroke="#aaa" stroke-width="0.8"/><line x1="670.1" y1="350.5" x2="670.1" y2="352" stroke="#aaa" stroke-width="0.8"/><line x1="683.0" y1="350.5" x2="683.0" y2="352" stroke="#aaa" stroke-width="0.8"/><line x1="695.9" y1="350.5" x2="695.9" y2="352" stroke="#aaa" stroke-width="0.8"/><line x1="708.8" y1="350.5" x2="708.8" y2="352" stroke="#aaa" stroke-width="0.8"/><line x1="721.6" y1="350.5" x2="721.6" y2="352" stroke="#aaa" stroke-width="0.8"/><line x1="734.5" y1="350.5" x2="734.5" y2="352" stroke="#aaa" stroke-width="0.8"/><line x1="747.4" y1="350.5" x2="747.4" y2="352" stroke="#aaa" stroke-width="0.8"/><line x1="760.3" y1="350.5" x2="760.3" y2="352" stroke="#aaa" stroke-width="0.8"/><line x1="773.2" y1="350.5" x2="773.2" y2="352" stroke="#aaa" stroke-width="0.8"/><line x1="786.1" y1="350.5" x2="786.1" y2="352" stroke="#aaa" stroke-width="0.8"/><line x1="799.0" y1="350.5" x2="799.0" y2="352" stroke="#aaa" stroke-width="0.8"/><line x1="811.9" y1="350.5" x2="811.9" y2="352" stroke="#aaa" stroke-width="0.8"/><line x1="824.8" y1="350.5" x2="824.8" y2="352" stroke="#aaa" stroke-width="0.8"/><line x1="837.7" y1="350.5" x2="837.7" y2="352" stroke="#aaa" stroke-width="0.8"/><line x1="850.6" y1="350.5" x2="850.6" y2="352" stroke="#aaa" stroke-width="0.8"/><line x1="863.5" y1="350.5" x2="863.5" y2="352" stroke="#aaa" stroke-width="0.8"/><line x1="876.4" y1="350.5" x2="876.4" y2="352" stroke="#aaa" stroke-width="0.8"/><line x1="889.3" y1="350.5" x2="889.3" y2="352" stroke="#aaa" stroke-width="0.8"/><line x1="902.2" y1="350.5" x2="902.2" y2="352" stroke="#aaa" stroke-width="0.8"/><line x1="915.1" y1="350.5" x2="915.1" y2="352" stroke="#aaa" stroke-width="0.8"/><line x1="928.0" y1="350.5" x2="928.0" y2="352" stroke="#aaa" stroke-width="0.8"/><line x1="940.9" y1="350.5" x2="940.9" y2="352" stroke="#aaa" stroke-width="0.8"/><line x1="953.8" y1="350.5" x2="953.8" y2="352" stroke="#aaa" stroke-width="0.8"/><line x1="313.5" y1="106.9" x2="315" y2="106.9" stroke="#bbb" stroke-width="0.8"/><line x1="313.5" y1="111.7" x2="315" y2="111.7" stroke="#bbb" stroke-width="0.8"/><line x1="313.5" y1="116.6" x2="315" y2="116.6" stroke="#bbb" stroke-width="0.8"/><line x1="313.5" y1="121.4" x2="315" y2="121.4" stroke="#bbb" stroke-width="0.8"/><line x1="313.5" y1="126.2" x2="315" y2="126.2" stroke="#bbb" stroke-width="0.8"/><line x1="313.5" y1="131.1" x2="315" y2="131.1" stroke="#bbb" stroke-width="0.8"/><line x1="313.5" y1="135.9" x2="315" y2="135.9" stroke="#bbb" stroke-width="0.8"/><line x1="313.5" y1="140.7" x2="315" y2="140.7" stroke="#bbb" stroke-width="0.8"/><line x1="313.5" y1="145.5" x2="315" y2="145.5" stroke="#bbb" stroke-width="0.8"/><line x1="313.5" y1="150.4" x2="315" y2="150.4" stroke="#bbb" stroke-width="0.8"/><line x1="313.5" y1="155.2" x2="315" y2="155.2" stroke="#bbb" stroke-width="0.8"/><line x1="313.5" y1="160.0" x2="315" y2="160.0" stroke="#bbb" stroke-width="0.8"/><line x1="313.5" y1="164.9" x2="315" y2="164.9" stroke="#bbb" stroke-width="0.8"/><line x1="313.5" y1="169.7" x2="315" y2="169.7" stroke="#bbb" stroke-width="0.8"/><line x1="313.5" y1="174.5" x2="315" y2="174.5" stroke="#bbb" stroke-width="0.8"/><line x1="313.5" y1="179.4" x2="315" y2="179.4" stroke="#bbb" stroke-width="0.8"/><line x1="313.5" y1="184.2" x2="315" y2="184.2" stroke="#bbb" stroke-width="0.8"/><line x1="313.5" y1="189.0" x2="315" y2="189.0" stroke="#bbb" stroke-width="0.8"/><line x1="313.5" y1="193.8" x2="315" y2="193.8" stroke="#bbb" stroke-width="0.8"/><line x1="313.5" y1="198.7" x2="315" y2="198.7" stroke="#bbb" stroke-width="0.8"/><line x1="313.5" y1="203.5" x2="315" y2="203.5" stroke="#bbb" stroke-width="0.8"/><line x1="313.5" y1="208.3" x2="315" y2="208.3" stroke="#bbb" stroke-width="0.8"/><line x1="313.5" y1="213.2" x2="315" y2="213.2" stroke="#bbb" stroke-width="0.8"/><line x1="313.5" y1="218.0" x2="315" y2="218.0" stroke="#bbb" stroke-width="0.8"/><line x1="313.5" y1="222.8" x2="315" y2="222.8" stroke="#bbb" stroke-width="0.8"/><line x1="313.5" y1="227.7" x2="315" y2="227.7" stroke="#bbb" stroke-width="0.8"/><line x1="313.5" y1="232.5" x2="315" y2="232.5" stroke="#bbb" stroke-width="0.8"/><line x1="313.5" y1="237.3" x2="315" y2="237.3" stroke="#bbb" stroke-width="0.8"/><line x1="313.5" y1="242.1" x2="315" y2="242.1" stroke="#bbb" stroke-width="0.8"/><line x1="313.5" y1="247.0" x2="315" y2="247.0" stroke="#bbb" stroke-width="0.8"/><line x1="313.5" y1="251.8" x2="315" y2="251.8" stroke="#bbb" stroke-width="0.8"/><line x1="313.5" y1="256.6" x2="315" y2="256.6" stroke="#bbb" stroke-width="0.8"/><line x1="313.5" y1="261.5" x2="315" y2="261.5" stroke="#bbb" stroke-width="0.8"/><line x1="313.5" y1="266.3" x2="315" y2="266.3" stroke="#bbb" stroke-width="0.8"/><line x1="313.5" y1="271.1" x2="315" y2="271.1" stroke="#bbb" stroke-width="0.8"/><line x1="313.5" y1="276.0" x2="315" y2="276.0" stroke="#bbb" stroke-width="0.8"/><line x1="313.5" y1="280.8" x2="315" y2="280.8" stroke="#bbb" stroke-width="0.8"/><line x1="313.5" y1="285.6" x2="315" y2="285.6" stroke="#bbb" stroke-width="0.8"/><line x1="313.5" y1="290.4" x2="315" y2="290.4" stroke="#bbb" stroke-width="0.8"/><line x1="313.5" y1="295.3" x2="315" y2="295.3" stroke="#bbb" stroke-width="0.8"/><line x1="313.5" y1="300.1" x2="315" y2="300.1" stroke="#bbb" stroke-width="0.8"/><line x1="313.5" y1="304.9" x2="315" y2="304.9" stroke="#bbb" stroke-width="0.8"/><line x1="313.5" y1="309.8" x2="315" y2="309.8" stroke="#bbb" stroke-width="0.8"/><line x1="313.5" y1="314.6" x2="315" y2="314.6" stroke="#bbb" stroke-width="0.8"/><line x1="313.5" y1="319.4" x2="315" y2="319.4" stroke="#bbb" stroke-width="0.8"/><line x1="313.5" y1="324.2" x2="315" y2="324.2" stroke="#bbb" stroke-width="0.8"/><line x1="313.5" y1="329.1" x2="315" y2="329.1" stroke="#bbb" stroke-width="0.8"/><line x1="313.5" y1="333.9" x2="315" y2="333.9" stroke="#bbb" stroke-width="0.8"/><line x1="313.5" y1="338.7" x2="315" y2="338.7" stroke="#bbb" stroke-width="0.8"/><line x1="313.5" y1="343.6" x2="315" y2="343.6" stroke="#bbb" stroke-width="0.8"/><line x1="313.5" y1="348.4" x2="315" y2="348.4" stroke="#bbb" stroke-width="0.8"/><line x1="474.9" y1="97.2" x2="474.9" y2="350.4" stroke="#e04a80" stroke-width="1.2" stroke-dasharray="1.4 1.4"/><line x1="510.6" y1="97.2" x2="510.6" y2="350.4" stroke="#d070d0" stroke-width="0.9"/><line x1="753.5" y1="98" x2="753.5" y2="350.4" stroke="#2a6a98" stroke-width="1" stroke-dasharray="1.2 1.4"/><line x1="869.5" y1="98" x2="869.5" y2="350.4" stroke="#3a8a3a" stroke-width="1" stroke-dasharray="1.2 1.4"/><polyline points="343.9,256.6 393.9,244.3 453.5,229.4 510.7,206.5 569.9,191.9 625.9,142 685.3,110.8 748,103.5 811.4,109.6 868.7,161.4 930.9,224.2" fill="none" stroke="#c2c2c2" stroke-width="1" stroke-dasharray="2 1.6"/><circle cx="343.9" cy="256.6" r="1.6" fill="none" stroke="#bdbdbd" stroke-width="0.8"/><circle cx="393.9" cy="244.3" r="1.6" fill="none" stroke="#bdbdbd" stroke-width="0.8"/><circle cx="453.5" cy="229.4" r="1.6" fill="none" stroke="#bdbdbd" stroke-width="0.8"/><circle cx="510.7" cy="206.5" r="1.6" fill="none" stroke="#bdbdbd" stroke-width="0.8"/><circle cx="569.9" cy="191.9" r="1.6" fill="none" stroke="#bdbdbd" stroke-width="0.8"/><circle cx="625.9" cy="142" r="1.6" fill="none" stroke="#bdbdbd" stroke-width="0.8"/><circle cx="685.3" cy="110.8" r="1.6" fill="none" stroke="#bdbdbd" stroke-width="0.8"/><circle cx="748" cy="103.5" r="1.6" fill="none" stroke="#bdbdbd" stroke-width="0.8"/><circle cx="811.4" cy="109.6" r="1.6" fill="none" stroke="#bdbdbd" stroke-width="0.8"/><circle cx="868.7" cy="161.4" r="1.6" fill="none" stroke="#bdbdbd" stroke-width="0.8"/><circle cx="930.9" cy="224.2" r="1.6" fill="none" stroke="#bdbdbd" stroke-width="0.8"/><polyline points="344.3,264.3 393.9,244.1 454.2,227.2 510.6,207.3 569.3,183.9 627.5,146 686.7,116.7 748,107.5 811.4,120 868.7,162.3 930.9,223.6" fill="none" stroke="#5c5c5c" stroke-width="1"/></svg>
<svg class="ab" style="left:0;top:0" width="975" height="550"><rect x="284" y="363.5" width="684" height="150.5" fill="#eeeeea"/><rect x="285.3" y="364" width="223.39999999999998" height="96.3" fill="#c0c0c0" stroke="#5a5a5a" stroke-width="1.2"/><rect x="285.3" y="461.2" width="223.39999999999998" height="51.4" fill="#c0c0c0" stroke="#5a5a5a" stroke-width="1.2"/><rect x="513.1" y="364" width="223.60000000000002" height="96.3" fill="#ffffff" stroke="#5a5a5a" stroke-width="1.2"/><rect x="513.1" y="461.2" width="223.60000000000002" height="51.4" fill="#ffffff" stroke="#5a5a5a" stroke-width="1.2"/><rect x="740.8" y="364" width="224.0" height="96.3" fill="#c0c0c0" stroke="#5a5a5a" stroke-width="1.2"/><rect x="740.8" y="461.2" width="224.0" height="51.4" fill="#c0c0c0" stroke="#5a5a5a" stroke-width="1.2"/><path d="M324.20 364.00 C324.20 364.00 331.50 429.00 331.50 429.00 C331.50 429.00 333.20 392.50 333.20 392.50 C333.20 392.50 333.68 392.73 334.00 393.50 C334.32 394.27 334.80 397.06 335.20 397.30 C335.60 397.54 334.93 395.69 336.50 395.00 C338.07 394.31 345.00 393.00 345.00 393.00 C345.00 393.00 363.00 390.00 363.00 390.00 C363.00 390.00 367.68 388.24 370.00 386.00 C372.32 383.76 375.58 377.50 377.50 376.00 C379.42 374.50 380.00 375.80 382.00 376.60 C384.00 377.40 387.52 379.58 390.00 381.00 C392.48 382.42 394.30 385.02 397.50 385.50 C400.70 385.98 410.00 384.00 410.00 384.00 C410.00 384.00 430.00 384.50 430.00 384.50 C430.00 384.50 451.00 385.60 451.00 385.60 C451.00 385.60 454.84 384.26 457.00 382.00 C459.16 379.74 462.42 372.62 464.50 371.50 C466.58 370.38 467.84 373.64 470.00 375.00 C472.16 376.36 475.12 378.78 478.00 380.00 C480.88 381.22 485.12 382.18 488.00 382.60 C490.88 383.02 494.48 382.86 496.00 382.60 C497.52 382.34 497.50 381.00 497.50 381.00 C497.50 381.00 500.50 443.50 500.50 443.50" fill="none" stroke="#3a3a3a" stroke-width="0.95"/><path d="M554.50 364.00 C554.50 364.00 563.50 436.00 563.50 436.00 C563.50 436.00 566.00 400.00 566.00 400.00 C566.00 400.00 566.68 400.04 567.00 401.00 C567.32 401.96 567.60 405.68 568.00 406.00 C568.40 406.32 567.58 403.96 569.50 403.00 C571.42 402.04 576.40 401.20 580.00 400.00 C583.60 398.80 589.12 397.42 592.00 395.50 C594.88 393.58 595.84 390.88 598.00 388.00 C600.16 385.12 603.74 379.02 605.50 377.50 C607.26 375.98 607.16 377.46 609.00 378.50 C610.84 379.54 614.44 382.38 617.00 384.00 C619.56 385.62 625.00 388.60 625.00 388.60 C625.00 388.60 640.00 387.40 640.00 387.40 C640.00 387.40 660.00 388.60 660.00 388.60 C660.00 388.60 676.00 388.60 676.00 388.60 C676.00 388.60 680.60 384.74 683.00 382.00 C685.40 379.26 688.28 372.70 691.00 371.50 C693.72 370.30 697.28 372.98 700.00 374.50 C702.72 376.02 705.60 379.56 708.00 381.00 C710.40 382.44 712.44 383.10 715.00 383.50 C717.56 383.90 722.32 383.74 724.00 383.50 C725.68 383.26 725.50 382.00 725.50 382.00 C725.50 382.00 728.50 443.50 728.50 443.50" fill="none" stroke="#3a3a3a" stroke-width="0.95"/><path d="M784.50 364.00 C784.50 364.00 794.00 442.00 794.00 442.00 C794.00 442.00 796.50 402.40 796.50 402.40 C796.50 402.40 797.06 402.20 797.30 403.50 C797.54 404.80 797.57 409.94 798.00 410.50 C798.43 411.06 798.08 408.04 800.00 407.00 C801.92 405.96 810.00 404.00 810.00 404.00 C810.00 404.00 823.50 399.40 823.50 399.40 C823.50 399.40 827.08 393.36 829.00 390.00 C830.92 386.64 833.74 380.24 835.50 378.40 C837.26 376.56 837.84 377.92 840.00 378.50 C842.16 379.08 846.36 380.24 849.00 382.00 C851.64 383.76 853.14 388.22 856.50 389.50 C859.86 390.78 870.00 390.00 870.00 390.00 C870.00 390.00 890.00 390.20 890.00 390.20 C890.00 390.20 906.00 390.40 906.00 390.40 C906.00 390.40 910.60 385.88 913.00 383.00 C915.40 380.12 919.08 374.00 921.00 372.40 C922.92 370.80 923.08 372.42 925.00 373.00 C926.92 373.58 930.28 374.32 933.00 376.00 C935.72 377.68 938.88 382.06 942.00 383.50 C945.12 384.94 950.66 385.08 952.50 385.00 C954.34 384.92 953.50 383.00 953.50 383.00 C953.50 383.00 956.40 442.00 956.40 442.00" fill="none" stroke="#3a3a3a" stroke-width="0.95"/><line x1="378" y1="373.09999999999997" x2="378" y2="378.09999999999997" stroke="#f0c0d0" stroke-width="3" opacity="0.6"/><line x1="378" y1="373.3" x2="378" y2="377.9" stroke="#5a2840" stroke-width="1.3"/><line x1="464.5" y1="368.9" x2="464.5" y2="373.9" stroke="#f0c0d0" stroke-width="3" opacity="0.6"/><line x1="464.5" y1="369.1" x2="464.5" y2="373.7" stroke="#5a2840" stroke-width="1.3"/><line x1="605.5" y1="374.9" x2="605.5" y2="379.9" stroke="#f0c0d0" stroke-width="3" opacity="0.6"/><line x1="605.5" y1="375.1" x2="605.5" y2="379.7" stroke="#5a2840" stroke-width="1.3"/><line x1="691" y1="368.9" x2="691" y2="373.9" stroke="#f0c0d0" stroke-width="3" opacity="0.6"/><line x1="691" y1="369.1" x2="691" y2="373.7" stroke="#5a2840" stroke-width="1.3"/><line x1="835.5" y1="375.79999999999995" x2="835.5" y2="380.79999999999995" stroke="#f0c0d0" stroke-width="3" opacity="0.6"/><line x1="835.5" y1="376.0" x2="835.5" y2="380.59999999999997" stroke="#5a2840" stroke-width="1.3"/><line x1="921" y1="369.79999999999995" x2="921" y2="374.79999999999995" stroke="#f0c0d0" stroke-width="3" opacity="0.6"/><line x1="921" y1="370.0" x2="921" y2="374.59999999999997" stroke="#5a2840" stroke-width="1.3"/><line x1="287.5" y1="404.5" x2="508.5" y2="404.5" stroke="#e03060" stroke-width="1.3" stroke-dasharray="1.5 1.3"/><path d="M285.60 476.00 C286.30 477.12 288.26 480.28 290.00 483.00 C291.74 485.72 294.26 491.64 296.50 493.00 C298.74 494.36 301.52 492.30 304.00 491.50 C306.48 490.70 310.08 488.88 312.00 488.00 C313.92 487.12 314.88 485.92 316.00 486.00 C317.12 486.08 318.33 487.06 319.00 488.50 C319.67 489.94 320.20 495.00 320.20 495.00 C320.20 495.00 321.00 512.50 321.00 512.50" fill="none" stroke="#3a3a3a" stroke-width="0.95"/><line x1="331" y1="461.5" x2="331" y2="512.5" stroke="#333" stroke-width="0.9"/><path d="M333.40 461.50 C333.40 461.50 333.60 490.00 333.60 490.00 C333.60 490.00 334.10 482.96 334.40 482.00 C334.70 481.04 334.92 483.76 335.50 484.00 C336.08 484.24 336.48 483.34 338.00 483.50 C339.52 483.66 345.00 485.00 345.00 485.00 C345.00 485.00 361.00 485.50 361.00 485.50 C361.00 485.50 363.80 481.92 365.00 480.00 C366.20 478.08 367.54 474.46 368.50 473.50 C369.46 472.54 370.04 473.44 371.00 474.00 C371.96 474.56 373.38 475.24 374.50 477.00 C375.62 478.76 376.80 482.68 378.00 485.00 C379.20 487.32 380.40 491.02 382.00 491.50 C383.60 491.98 386.08 488.72 388.00 488.00 C389.92 487.28 391.12 487.40 394.00 487.00 C396.88 486.60 406.00 485.50 406.00 485.50 C406.00 485.50 430.00 486.50 430.00 486.50 C430.00 486.50 448.00 487.00 448.00 487.00 C448.00 487.00 451.56 482.92 453.00 481.00 C454.44 479.08 455.72 475.80 457.00 475.00 C458.28 474.20 460.04 475.52 461.00 476.00 C461.96 476.48 462.20 476.40 463.00 478.00 C463.80 479.60 465.04 483.60 466.00 486.00 C466.96 488.40 467.40 492.36 469.00 493.00 C470.60 493.64 473.60 490.96 476.00 490.00 C478.40 489.04 481.76 487.40 484.00 487.00 C486.24 486.60 488.46 487.26 490.00 487.50 C491.54 487.74 493.60 488.50 493.60 488.50 C493.60 488.50 495.40 512.50 495.40 512.50" fill="none" stroke="#3a3a3a" stroke-width="0.95"/><path d="M513.50 473.50 C514.06 474.22 515.64 475.36 517.00 478.00 C518.36 480.64 520.56 487.36 522.00 490.00 C523.44 492.64 524.40 494.02 526.00 494.50 C527.60 494.98 529.76 494.04 532.00 493.00 C534.24 491.96 538.08 489.12 540.00 488.00 C541.92 486.88 542.40 485.92 544.00 486.00 C545.60 486.08 548.88 487.06 550.00 488.50 C551.12 489.94 551.00 495.00 551.00 495.00 C551.00 495.00 552.00 512.50 552.00 512.50" fill="none" stroke="#3a3a3a" stroke-width="0.95"/><line x1="562" y1="461.5" x2="562" y2="512.5" stroke="#333" stroke-width="0.9"/><path d="M566.30 461.50 C566.30 461.50 566.50 490.00 566.50 490.00 C566.50 490.00 567.02 482.44 567.50 481.00 C567.98 479.56 568.30 480.60 569.50 481.00 C570.70 481.40 572.36 482.78 575.00 483.50 C577.64 484.22 583.28 485.66 586.00 485.50 C588.72 485.34 590.56 484.02 592.00 482.50 C593.44 480.98 594.04 477.68 595.00 476.00 C595.96 474.32 597.04 472.48 598.00 472.00 C598.96 471.52 600.04 472.04 601.00 473.00 C601.96 473.96 602.56 475.60 604.00 478.00 C605.44 480.40 607.36 485.12 610.00 488.00 C612.64 490.88 617.62 496.16 620.50 496.00 C623.38 495.84 625.84 488.68 628.00 487.00 C630.16 485.32 634.00 485.50 634.00 485.50 C634.00 485.50 650.00 486.50 650.00 486.50 C650.00 486.50 673.00 487.00 673.00 487.00 C673.00 487.00 675.04 483.96 676.00 483.00 C676.96 482.04 677.56 482.66 679.00 481.00 C680.44 479.34 683.56 473.72 685.00 472.60 C686.44 471.48 687.04 473.14 688.00 474.00 C688.96 474.86 689.56 475.44 691.00 478.00 C692.44 480.56 694.60 486.88 697.00 490.00 C699.40 493.12 703.60 497.66 706.00 497.50 C708.40 497.34 710.56 490.68 712.00 489.00 C713.44 487.32 713.56 487.08 715.00 487.00 C716.44 486.92 721.00 488.50 721.00 488.50 C721.00 488.50 723.40 512.50 723.40 512.50" fill="none" stroke="#3a3a3a" stroke-width="0.95"/><path d="M741.60 473.50 C742.46 474.22 745.34 475.84 747.00 478.00 C748.66 480.16 749.60 484.12 752.00 487.00 C754.40 489.88 759.44 495.52 762.00 496.00 C764.56 496.48 766.08 491.60 768.00 490.00 C769.92 488.40 772.08 486.16 774.00 486.00 C775.92 485.84 778.91 487.56 780.00 489.00 C781.09 490.44 780.80 495.00 780.80 495.00 C780.80 495.00 781.50 512.50 781.50 512.50" fill="none" stroke="#3a3a3a" stroke-width="0.95"/><line x1="793" y1="461.5" x2="793" y2="512.5" stroke="#333" stroke-width="0.9"/><path d="M796.50 461.50 C796.50 461.50 796.70 490.00 796.70 490.00 C796.70 490.00 797.05 482.44 797.50 481.00 C797.95 479.56 798.30 480.68 799.50 481.00 C800.70 481.32 802.36 482.28 805.00 483.00 C807.64 483.72 813.28 486.30 816.00 485.50 C818.72 484.70 820.08 480.64 822.00 478.00 C823.92 475.36 826.56 470.12 828.00 469.00 C829.44 467.88 830.04 469.80 831.00 471.00 C831.96 472.20 832.56 473.94 834.00 476.50 C835.44 479.06 840.00 487.00 840.00 487.00 C840.00 487.00 850.50 497.50 850.50 497.50 C850.50 497.50 854.88 488.76 858.00 487.00 C861.12 485.24 870.00 486.50 870.00 486.50 C870.00 486.50 903.00 487.00 903.00 487.00 C903.00 487.00 906.32 480.72 908.00 478.00 C909.68 475.28 912.22 470.96 913.50 470.00 C914.78 469.04 915.04 470.24 916.00 472.00 C916.96 473.76 917.90 477.96 919.50 481.00 C921.10 484.04 923.84 488.12 926.00 491.00 C928.16 493.88 931.08 498.84 933.00 499.00 C934.92 499.16 936.32 493.82 938.00 492.00 C939.68 490.18 941.66 487.92 943.50 487.60 C945.34 487.28 948.38 488.50 949.50 490.00 C950.62 491.50 950.50 497.00 950.50 497.00 C950.50 497.00 951.60 512.50 951.60 512.50" fill="none" stroke="#3a3a3a" stroke-width="0.95"/></svg>
<div class="ab" style="left:6.2px;top:503.6px;width:52.199999999999996px;height:10.6px;background:#efede3;border-top:1px solid #fbfaf4;border-left:1px solid #fbfaf4;border-right:1.2px solid #8e8c80;border-bottom:1.2px solid #8e8c80"></div>
<div class="t" style="left:25.50px;top:506.16px;font-size:7px;font-weight:normal;font-style:normal;color:#141414;transform:scaleX(0.756);transform-origin:0 0;">+ Событие</div>
<svg class="ab" style="left:13px;top:506px" width="10" height="6"><rect x="0.6" y="1.2" width="5.6" height="3" fill="#24446e"/><rect x="6.4" y="2" width="2.2" height="1.6" fill="#9ab0c0"/></svg>
<div class="ab" style="left:60.6px;top:503.6px;width:51.4px;height:10.6px;background:#efede3;border-top:1px solid #fbfaf4;border-left:1px solid #fbfaf4;border-right:1.2px solid #8e8c80;border-bottom:1.2px solid #8e8c80"></div>
<div class="t" style="left:82.00px;top:506.16px;font-size:7px;font-weight:normal;font-style:normal;color:#bab8ac;transform:scaleX(0.759);transform-origin:0 0;">Событие</div>
<svg class="ab" style="left:68px;top:505px" width="10" height="9"><rect x="1" y="1" width="4.5" height="3.2" fill="#a8b8cc"/><rect x="1" y="4.8" width="4.5" height="3.2" fill="#a8b8cc"/><path d="M5.5 4.5 H8.5" stroke="#c0cad8" stroke-width="1.2"/></svg>
<div class="ab" style="left:112.8px;top:503.6px;width:52.8px;height:10.6px;background:#efede3;border-top:1px solid #fbfaf4;border-left:1px solid #fbfaf4;border-right:1.2px solid #8e8c80;border-bottom:1.2px solid #8e8c80"></div>
<div class="t" style="left:135.40px;top:506.16px;font-size:7px;font-weight:normal;font-style:normal;color:#141414;transform:scaleX(0.825);transform-origin:0 0;">Правка</div>
<svg class="ab" style="left:124.5px;top:504.8px" width="10" height="9"><path d="M1.5 8 Q2 4 5 2 Q7 0.8 8.5 2 Q7 3 5.5 4.5 L3 7.5 Z" fill="#d8e0e8" stroke="#506070" stroke-width="0.9"/><path d="M0.5 8.6 H5" stroke="#7898b8" stroke-width="1"/></svg>
<div class="ab" style="left:3.3px;top:517.6px;width:35px;height:11.5px;border-top:1px solid #c9c5b4;border-left:1px solid #c9c5b4"></div>
<div class="ab" style="left:38.6px;top:517.6px;width:1px;height:11.5px;background:#fbfaf2"></div>
<div class="ab" style="left:40px;top:517.6px;width:100px;height:11.5px;border-top:1px solid #c9c5b4;border-left:1px solid #c9c5b4"></div>
<div class="ab" style="left:139.5px;top:517.6px;width:1px;height:11.5px;background:#fbfaf2"></div>
<div class="ab" style="left:140.5px;top:517.6px;width:831px;height:11.5px;border-top:1px solid #a8a698;border-left:1px solid #a8a698"></div>
<div class="t" style="left:142.00px;top:521.43px;font-size:7.3px;font-weight:normal;font-style:normal;color:#111;transform:scaleX(0.970);transform-origin:0 0;">Нажмите F5 для переключения фокуса окна заключения</div>
<div class="ab" style="left:2.3px;top:529.4px;width:971px;height:1.1px;background:#eef2fa"></div>
<div class="ab" style="left:2.3px;top:530.5px;width:970px;height:17.2px;background:linear-gradient(#3f8cf3 0%,#2a6ee8 8%,#245edb 20%,#2258d6 60%,#1c4fc8 92%,#1941a5 100%)"></div>
<div class="ab" style="left:2.3px;top:530.6px;width:46.8px;height:16.9px;border-radius:0 5px 5px 0;background:linear-gradient(#62b862 0%,#46a446 18%,#379637 55%,#2f862f 85%,#2a7a2a 100%);border-right:0.8px solid #1e5e1e"></div>
<svg class="ab" style="left:8px;top:535.5px" width="9" height="9"><path d="M0.5 1.5 Q2 0.5 4 1 L3.6 4 Q2 3.5 0.2 4.3 Z" fill="#f05030"/><path d="M4.6 1.2 Q6.5 1.7 8.5 0.8 L8 3.8 Q6 4.6 4.2 4.1 Z" fill="#50c040"/><path d="M0.1 4.9 Q2 4.2 3.5 4.7 L3.1 7.7 Q1.5 7.2 -0.3 8 Z" fill="#3a7ee8"/><path d="M4.1 4.8 Q6 5.3 8 4.5 L7.6 7.5 Q5.6 8.3 3.7 7.8 Z" fill="#f8d030"/></svg>
<div class="t" style="left:19.50px;top:536.72px;font-size:9px;font-weight:bold;font-style:italic;color:#fff;transform:scaleX(0.887);transform-origin:0 0;">пуск</div>
<svg class="ab" style="left:0;top:528px" width="975" height="22" viewBox="0 528 975 22"><defs><radialGradient id="chr"><stop offset="0.35" stop-color="#3a78d8"/><stop offset="0.45" stop-color="#fff"/><stop offset="0.55" stop-color="#e04a3a"/></radialGradient></defs><rect x="62.3" y="536.8" width="6.6" height="6.6" fill="#f0f0f4" stroke="#b0b8c8" stroke-width="0.5"/><rect x="62.8" y="538.2" width="5.6" height="1.2" fill="#d04050"/><rect x="62.8" y="539.8" width="5.6" height="1" fill="#3050a0"/><circle cx="77.6" cy="540" r="3.6" fill="#e8443a"/><path d="M77.6 540 L80.7 541.8 A3.6 3.6 0 0 1 74.5 541.8 Z" fill="#38a848"/><path d="M77.6 540 L80.7 541.8 A3.6 3.6 0 0 0 77.6 536.4 Z" fill="#f0c830"/><circle cx="77.6" cy="540" r="1.5" fill="#4a84e0" stroke="#fff" stroke-width="0.6"/><rect x="85.2" y="536.6" width="7" height="7" rx="1.5" fill="#f8f0c8"/><circle cx="88.7" cy="540.2" r="2.6" fill="#f0c840"/><path d="M87.2 540.8 Q88.7 542.3 90.2 540.8" fill="none" stroke="#a07020" stroke-width="0.6"/><path d="M97.5 543 Q98 537 103.5 536.5" fill="none" stroke="#a8d8f0" stroke-width="1.3"/><path d="M98.5 541.5 Q101 538.5 104 540.5 Q102.5 543.5 99.5 543" fill="none" stroke="#5aa0e0" stroke-width="1.1"/><rect x="108.5" y="536.5" width="6.3" height="7" rx="0.8" fill="#e8f0fa" stroke="#7090c0" stroke-width="0.6"/><rect x="109.5" y="538.5" width="4.3" height="3.5" fill="#9ab8e0"/><rect x="123.5" y="535" width="0.8" height="1" fill="#7aa0e8"/><rect x="123.5" y="537" width="0.8" height="1" fill="#7aa0e8"/><rect x="125.5" y="535" width="0.8" height="1" fill="#7aa0e8"/><rect x="125.5" y="537" width="0.8" height="1" fill="#7aa0e8"/></svg>
<div class="ab" style="left:135.5px;top:533.6px;width:76.6px;height:12.6px;border-radius:2px;background:linear-gradient(#4a8ef6,#3e82f0 30%,#3a7bea 85%,#3270dc)"></div>
<div class="t" style="left:149.40px;top:537.34px;font-size:6.8px;font-weight:normal;font-style:normal;color:#fff;transform:scaleX(0.835);transform-origin:0 0;">Товары - PrestaShop...</div>
<svg class="ab" style="left:140px;top:536.3px" width="8" height="8"><circle cx="4" cy="4" r="3.5" fill="#e8443a"/><path d="M4 4 L7 5.8 A3.5 3.5 0 0 1 1 5.8 Z" fill="#38a848"/><path d="M4 4 L7 5.8 A3.5 3.5 0 0 0 4 0.5 Z" fill="#f0c830"/><circle cx="4" cy="4" r="1.5" fill="#4a84e0" stroke="#fff" stroke-width="0.6"/></svg>
<div class="ab" style="left:215.8px;top:533.6px;width:81.19999999999999px;height:12.6px;border-radius:2px;background:linear-gradient(#1c4cb8,#1b48b0 50%,#1e4cb4)"></div>
<div class="t" style="left:230.60px;top:537.34px;font-size:6.8px;font-weight:normal;font-style:normal;color:#f0f4ff;transform:scaleX(0.805);transform-origin:0 0;">Bplabwin</div>
<svg class="ab" style="left:223.2px;top:537.8px" width="4.8" height="4" viewBox="0 0 7 6" preserveAspectRatio="none"><path d="M3.5 6 L0.3 2.6 C-0.5 1.4 0.5 0 1.8 0 C2.6 0 3.2 0.6 3.5 1.1 C3.8 0.6 4.4 0 5.2 0 C6.5 0 7.5 1.4 6.7 2.6 Z" fill="#e0ecff"/></svg>
<div class="ab" style="left:298.5px;top:533.6px;width:77.89999999999998px;height:12.6px;border-radius:2px;background:linear-gradient(#4a8ef6,#3e82f0 30%,#3a7bea 85%,#3270dc)"></div>
<div class="t" style="left:310.80px;top:537.34px;font-size:6.8px;font-weight:normal;font-style:normal;color:#fff;transform:scaleX(0.856);transform-origin:0 0;">тренды 1 - Microsoft...</div>
<svg class="ab" style="left:302.3px;top:536.2px" width="8" height="8"><rect x="1" y="0.5" width="6" height="7" fill="#fff" stroke="#8090a8" stroke-width="0.6"/><rect x="0.3" y="2" width="3.6" height="4" fill="#2050a0"/><path d="M4.5 2.5 H6.5 M4.5 4 H6.5 M4.5 5.5 H6.5" stroke="#8898b0" stroke-width="0.6"/></svg>
<div class="ab" style="left:752.7px;top:535px;width:111px;height:9.6px;background:#fff;border:1px solid #8fb0e0"></div>
<div class="t" style="left:755.30px;top:537.35px;font-size:6.3px;font-weight:normal;font-style:normal;color:#a0a0a0;transform:scaleX(0.856);transform-origin:0 0;">Поиск на рабочем столе</div>
<div class="ab" style="left:863.5px;top:535px;width:12.3px;height:9.6px;background:linear-gradient(#f4f6fa,#d0d8e6);border:1px solid #8fb0e0"></div>
<svg class="ab" style="left:866px;top:536px" width="8" height="8"><circle cx="4.6" cy="3.4" r="2.1" fill="none" stroke="#445" stroke-width="0.9"/><path d="M3.1 4.9 L1 7" stroke="#445" stroke-width="1.2"/></svg>
<div class="t" style="left:889.70px;top:537.34px;font-size:6.8px;font-weight:normal;font-style:normal;color:#dce8ff;transform:scaleX(0.794);transform-origin:0 0;">RU</div>
<div class="ab" style="left:904.4px;top:530.6px;width:68.2px;height:17px;background:linear-gradient(#1ca0ee,#1290e6 12%,#0f8ae0 85%,#0c78c8);border-left:1px solid #3aa8f0"></div>
<svg class="ab" style="left:900px;top:528px" width="75" height="22" viewBox="900 528 75 22"><circle cx="908.2" cy="540.3" r="4" fill="#8ec4f4" stroke="#c8e4fc" stroke-width="0.6"/><path d="M909.5 538 L907.3 540.3 L909.5 542.6" fill="none" stroke="#fff" stroke-width="1.2"/><circle cx="916.7" cy="540" r="3.6" fill="#58c048"/><circle cx="916.7" cy="540" r="1.6" fill="#c8f0a0"/><circle cx="927.4" cy="539" r="2.9" fill="#e8f4fc"/><path d="M925.3 541 L924.6 543.5 L927 541.8 Z" fill="#e8f4fc"/><circle cx="926" cy="543.2" r="1" fill="#1a3a90"/><rect x="932" y="536.5" width="6.5" height="7" fill="#e8e8f0"/><rect x="932.3" y="537.5" width="3.6" height="4.5" fill="#d82848"/><rect x="940.4" y="536.5" width="6.9" height="6" fill="#1a2a70"/><rect x="941.5" y="537.5" width="3" height="3" fill="#e8f0ff"/><rect x="942" y="542.5" width="4" height="1.2" fill="#c0c8e0"/></svg>
<div class="t" style="left:952.10px;top:537.34px;font-size:6.8px;font-weight:normal;font-style:normal;color:#eef4ff;transform:scaleX(0.835);transform-origin:0 0;">17:55</div>
</body></html>
